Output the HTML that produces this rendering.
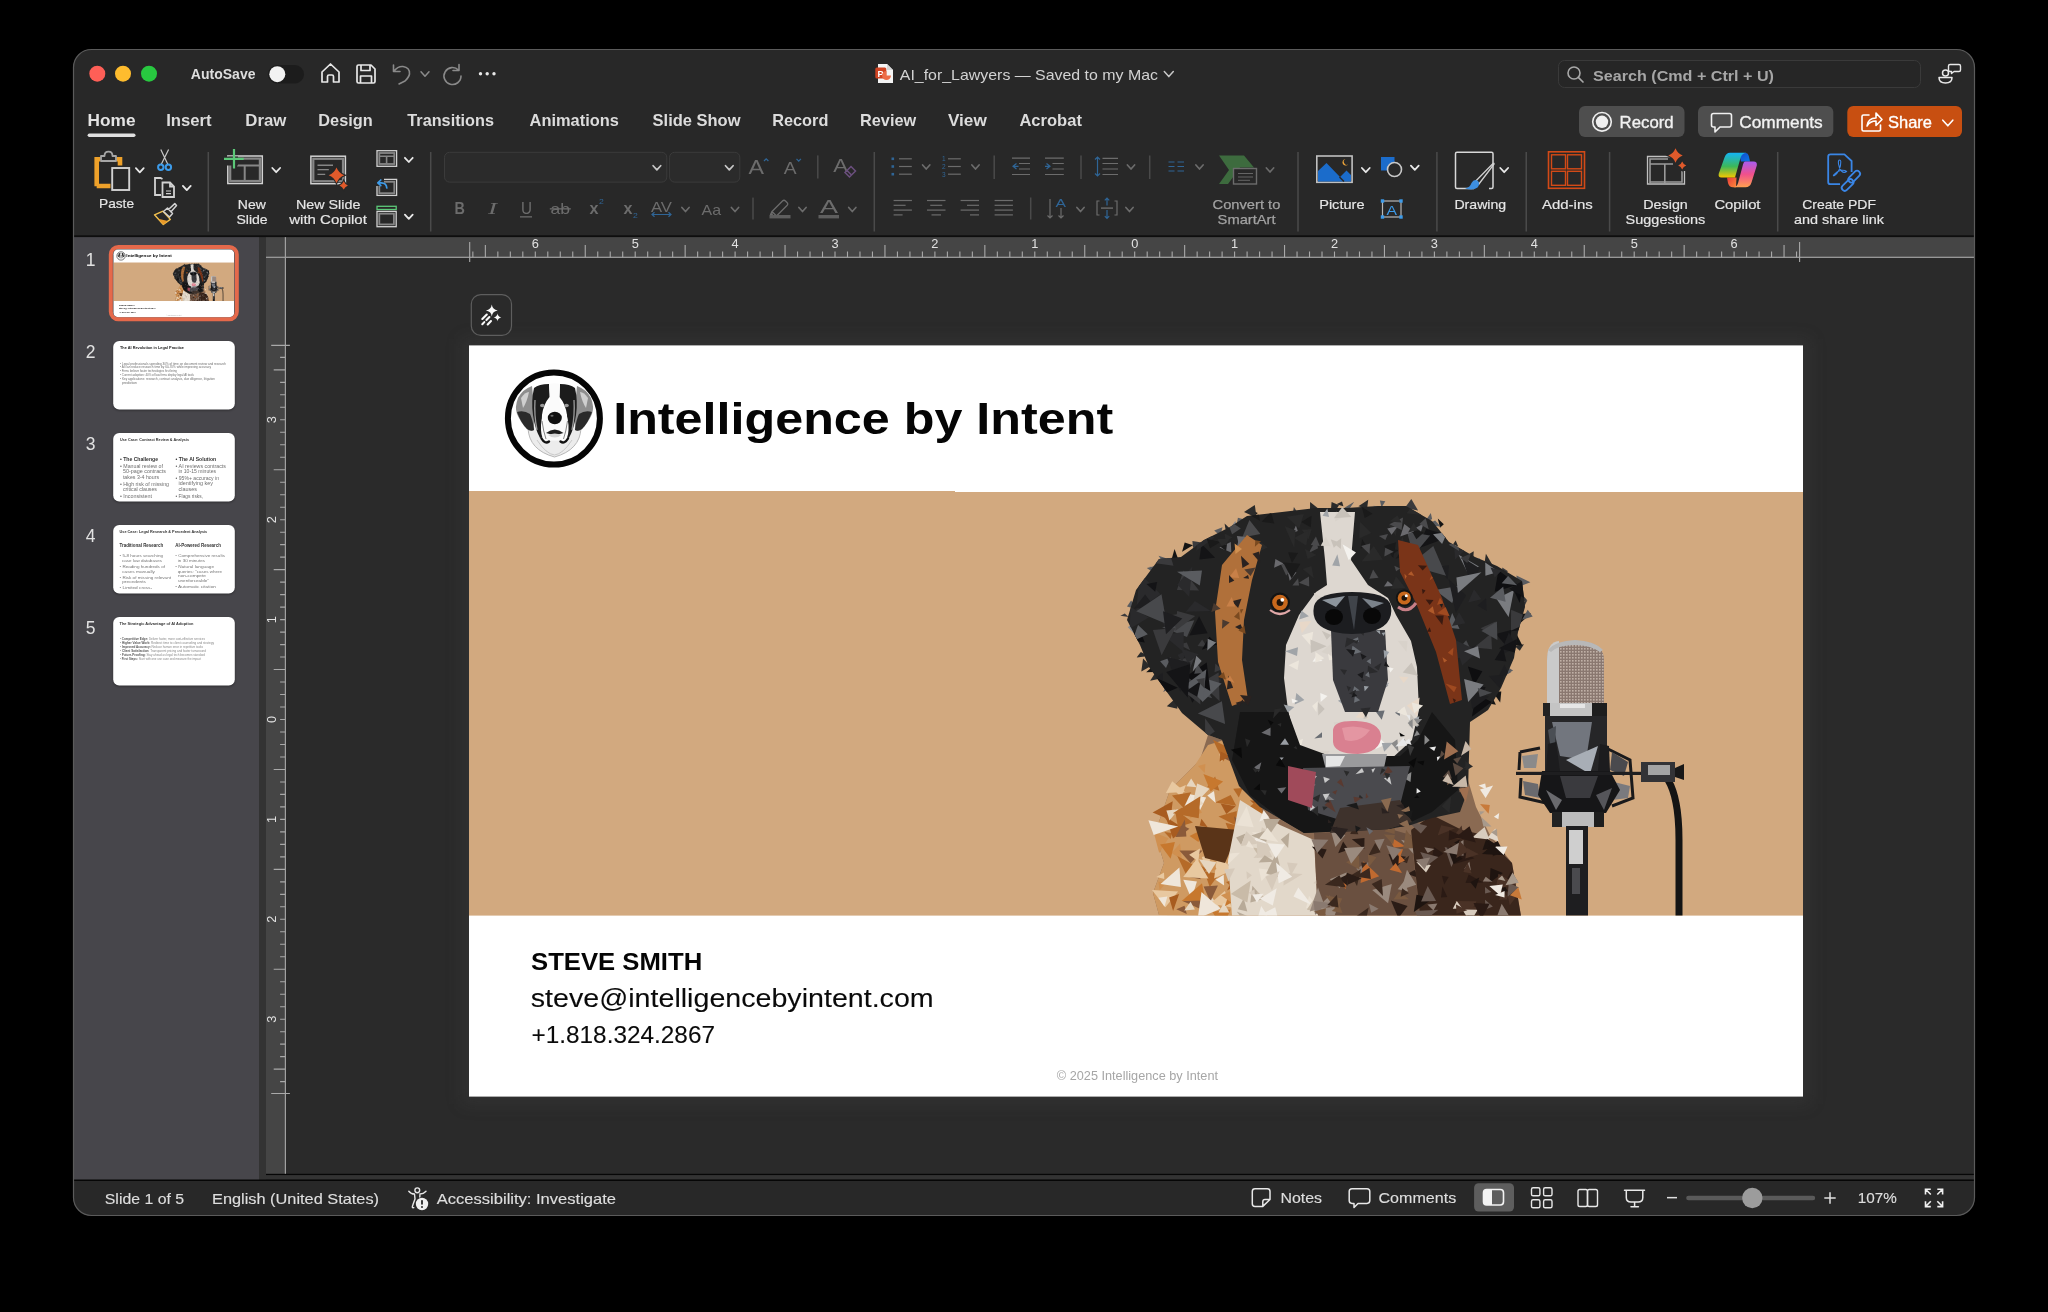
<!DOCTYPE html>
<html><head><meta charset="utf-8">
<style>
*{margin:0;padding:0}
html,body{width:2048px;height:1312px;background:#000;overflow:hidden}
svg{position:absolute;left:0;top:0;font-family:"Liberation Sans",sans-serif;will-change:transform}
text{white-space:pre}
</style></head><body>
<svg width="2048" height="1312" viewBox="0 0 2048 1312">

<defs><clipPath id="winclip"><rect x="73.5" y="49.5" width="1901" height="1166" rx="18"/></clipPath><linearGradient id="edg" x1="0" y1="0" x2="0" y2="1"><stop offset="0" stop-color="#2b2b2b"/><stop offset="1" stop-color="#292929"/></linearGradient><radialGradient id="slideshadow" cx="0.5" cy="0.5" r="0.5"><stop offset="0.85" stop-color="#000" stop-opacity="0.25"/><stop offset="1" stop-color="#000" stop-opacity="0"/></radialGradient><filter id="blur8" x="-10%" y="-10%" width="120%" height="120%"><feGaussianBlur stdDeviation="8"/></filter><filter id="blur3" x="-10%" y="-10%" width="120%" height="120%"><feGaussianBlur stdDeviation="2"/></filter></defs>
<g clip-path="url(#winclip)">
<rect x="73" y="49" width="1902" height="1167" fill="#282828" rx="0" />
<rect x="74" y="237" width="185" height="943" fill="#47464b" rx="0" />
<rect x="259" y="237" width="7" height="943" fill="#333333" rx="0" />
<rect x="266" y="237" width="1708" height="21" fill="#454545" rx="0" />
<rect x="266" y="237" width="19.5" height="937" fill="#454545" rx="0" />
<rect x="286" y="258" width="1689" height="916" fill="#2a2a2a" rx="0" />
<rect x="266" y="256.7" width="1708" height="1.2" fill="#a0a0a0" rx="0" />
<rect x="284.8" y="237" width="1.2" height="937" fill="#a0a0a0" rx="0" />
<rect x="73" y="235.3" width="1902" height="1.8" fill="#0e0e0e" rx="0" />
<rect x="266" y="1173.8" width="1709" height="1.4" fill="#060606" rx="0" />
<rect x="266" y="1175.2" width="1709" height="4.3" fill="#333333" rx="0" />
<rect x="73" y="1179.5" width="1902" height="1.5" fill="#060606" rx="0" />
<rect x="73" y="1181" width="1902" height="40" fill="#282828" rx="0" />
</g>
<rect x="73.5" y="49.5" width="1901" height="1166" rx="18" fill="none" stroke="#5b5b5b" stroke-width="1.2"/>
<circle cx="97.3" cy="73.7" r="8" fill="#fe5f57"/>
<circle cx="123.0" cy="73.7" r="8" fill="#febc2e"/>
<circle cx="149.0" cy="73.7" r="8" fill="#28c840"/>
<text x="190.8" y="79.0" font-size="14" font-weight="bold" fill="#dedede" textLength="64.7" lengthAdjust="spacingAndGlyphs" >AutoSave</text>
<rect x="268" y="65" width="36" height="18.5" fill="#1c1c1c" rx="9.25" />
<circle cx="277.3" cy="74.2" r="8" fill="#f2f2f2"/>
<path d="M322 82 V72 L330.5 64 L339 72 V82 H333.5 V76.5 Q333.5 75 332 75 H329 Q327.5 75 327.5 76.5 V82 Z" fill="none" stroke="#e8e8e8" stroke-width="1.7" stroke-linejoin="round"/>
<path d="M357 66.5 Q357 65 358.5 65 H371 L375 69 V81.5 Q375 83 373.5 83 H358.5 Q357 83 357 81.5 Z M361 65 V70.5 H370 V65 M360.5 83 V76 H371.5 V83" fill="none" stroke="#e8e8e8" stroke-width="1.7" stroke-linejoin="round"/>
<path d="M393.5 65 V71.5 H400 M394 71 Q398 66 403 66.5 Q410 67.5 409.5 74 Q409 77 405 81 L399 84" fill="none" stroke="#8a8a8a" stroke-width="1.6" stroke-linecap="round" stroke-linejoin="round"/>
<path d="M421.0 71.8 L425.0 76.3 L429.0 71.8" fill="none" stroke="#8a8a8a" stroke-width="1.5" stroke-linecap="round" stroke-linejoin="round"/>
<path d="M459 64.5 V70.5 H453 M458.5 70 A8.5 8.5 0 1 0 461 76" fill="none" stroke="#8a8a8a" stroke-width="1.6" stroke-linecap="round" stroke-linejoin="round"/>
<circle cx="480.5" cy="73.8" r="1.7" fill="#e8e8e8"/>
<circle cx="487.2" cy="73.8" r="1.7" fill="#e8e8e8"/>
<circle cx="494" cy="73.8" r="1.7" fill="#e8e8e8"/>
<path d="M878 64 H887 L893 70 V83 H878 Z" fill="#f4f4f4"/><path d="M887 64 V70 H893" fill="#d6d6d6"/><rect x="875.3" y="67.5" width="11" height="11" rx="1.5" fill="#d04423"/><text x="877.6" y="76.5" font-size="9" font-weight="bold" fill="#fff">P</text><path d="M886.5 71 A4.5 4.5 0 1 0 891 75.5 H886.5 Z" fill="#ed6c47"/>
<text x="899.8" y="79.9" font-size="15" font-weight="normal" fill="#d2d2d2" textLength="258.2" lengthAdjust="spacingAndGlyphs" >AI_for_Lawyers — Saved to my Mac</text>
<path d="M1164.3 71.6 L1168.8 76.6 L1173.3 71.6" fill="none" stroke="#c8c8c8" stroke-width="1.5" stroke-linecap="round" stroke-linejoin="round"/>
<rect x="1558.5" y="60.5" width="362" height="27" rx="6" fill="#262626" stroke="#3a3a3a" stroke-width="1"/>
<circle cx="1574" cy="73" r="6" fill="none" stroke="#a8a8a8" stroke-width="1.6"/><path d="M1578.3 77.3 L1583 82" stroke="#a8a8a8" stroke-width="1.7" stroke-linecap="round"/>
<text x="1593.0" y="80.6" font-size="15.5" font-weight="bold" fill="#a6a6a6" textLength="181.0" lengthAdjust="spacingAndGlyphs" >Search (Cmd + Ctrl + U)</text>
<circle cx="1945.5" cy="73" r="3" fill="none" stroke="#e8e8e8" stroke-width="1.5"/><path d="M1939 77.5 H1952 Q1952 83 1945.5 83 Q1939 83 1939 77.5 Z" fill="none" stroke="#e8e8e8" stroke-width="1.5" stroke-linejoin="round"/><path d="M1950 64.5 H1959 Q1960.5 64.5 1960.5 66 V70 Q1960.5 71.5 1959 71.5 H1954 L1951.5 73.5 V71.5 H1950 Q1948.5 71.5 1948.5 70 V66 Q1948.5 64.5 1950 64.5 Z" fill="none" stroke="#e8e8e8" stroke-width="1.4" stroke-linejoin="round"/>
<text x="87.6" y="125.9" font-size="17" font-weight="bold" fill="#e4e4e4" textLength="47.9" lengthAdjust="spacingAndGlyphs" >Home</text>
<text x="166.2" y="125.9" font-size="17" font-weight="bold" fill="#dcdcdc" textLength="45.5" lengthAdjust="spacingAndGlyphs" >Insert</text>
<text x="245.3" y="125.9" font-size="17" font-weight="bold" fill="#dcdcdc" textLength="41.1" lengthAdjust="spacingAndGlyphs" >Draw</text>
<text x="318.3" y="125.9" font-size="17" font-weight="bold" fill="#dcdcdc" textLength="54.5" lengthAdjust="spacingAndGlyphs" >Design</text>
<text x="407.3" y="125.9" font-size="17" font-weight="bold" fill="#dcdcdc" textLength="86.7" lengthAdjust="spacingAndGlyphs" >Transitions</text>
<text x="529.6" y="125.9" font-size="17" font-weight="bold" fill="#dcdcdc" textLength="89.3" lengthAdjust="spacingAndGlyphs" >Animations</text>
<text x="652.6" y="125.9" font-size="17" font-weight="bold" fill="#dcdcdc" textLength="87.9" lengthAdjust="spacingAndGlyphs" >Slide Show</text>
<text x="772.2" y="125.9" font-size="17" font-weight="bold" fill="#dcdcdc" textLength="56.2" lengthAdjust="spacingAndGlyphs" >Record</text>
<text x="860.0" y="125.9" font-size="17" font-weight="bold" fill="#dcdcdc" textLength="56.2" lengthAdjust="spacingAndGlyphs" >Review</text>
<text x="947.9" y="125.9" font-size="17" font-weight="bold" fill="#dcdcdc" textLength="38.9" lengthAdjust="spacingAndGlyphs" >View</text>
<text x="1019.4" y="125.9" font-size="17" font-weight="bold" fill="#dcdcdc" textLength="62.5" lengthAdjust="spacingAndGlyphs" >Acrobat</text>
<rect x="87.6" y="133.4" width="47.9" height="3.5" fill="#e0e0e0" rx="1.75" />
<rect x="1579" y="106" width="105.5" height="31" fill="#4e4e4e" rx="6" />
<circle cx="1602" cy="121.8" r="9.3" fill="none" stroke="#f0f0f0" stroke-width="1.6"/><circle cx="1602" cy="121.8" r="6.2" fill="#f0f0f0"/>
<text x="1619.6" y="128.0" font-size="17" font-weight="normal" fill="#f2f2f2" stroke="#f2f2f2" stroke-width="0.35" textLength="54.1" lengthAdjust="spacingAndGlyphs" >Record</text>
<rect x="1698" y="106" width="135.3" height="31" fill="#4e4e4e" rx="6" />
<path d="M1713.5 113.5 H1729.5 Q1731.5 113.5 1731.5 115.5 V125 Q1731.5 127 1729.5 127 H1720 L1715 132 V127 H1713.5 Q1711.5 127 1711.5 125 V115.5 Q1711.5 113.5 1713.5 113.5 Z" fill="none" stroke="#f0f0f0" stroke-width="1.6" stroke-linejoin="round"/>
<text x="1739.2" y="128.0" font-size="17" font-weight="normal" fill="#f2f2f2" stroke="#f2f2f2" stroke-width="0.35" textLength="83.5" lengthAdjust="spacingAndGlyphs" >Comments</text>
<rect x="1847.3" y="106" width="114.7" height="31" fill="#c84f11" rx="6" />
<path d="M1869 115 H1863.5 Q1862 115 1862 116.5 V129.5 Q1862 131 1863.5 131 H1879 Q1880.5 131 1880.5 129.5 V125" fill="none" stroke="#fff" stroke-width="1.6" stroke-linecap="round"/><path d="M1867 126 Q1868 118 1876 118 V113 L1882 119.5 L1876 125.5 V121 Q1870 121 1867 126 Z" fill="none" stroke="#fff" stroke-width="1.6" stroke-linejoin="round"/>
<text x="1888.0" y="128.0" font-size="17" font-weight="normal" fill="#ffffff" stroke="#ffffff" stroke-width="0.35" textLength="44.0" lengthAdjust="spacingAndGlyphs" >Share</text>
<path d="M1942.8 120.2 L1947.8 125.8 L1952.8 120.2" fill="none" stroke="#fff" stroke-width="1.6" stroke-linecap="round" stroke-linejoin="round"/>
<path d="M96.7 186.2 V159.2 H100.5 M116.5 159.2 H120 V165.5 M96.7 186 H110.5" fill="none" stroke="#eea12a" stroke-width="4.6" stroke-linejoin="miter"/>
<path d="M101 161 V156 H104.5 Q104.5 151.7 108.5 151.7 Q112.5 151.7 112.5 156 H116 V161 Z" fill="none" stroke="#a6a6a6" stroke-width="1.8" stroke-linejoin="round"/>
<rect x="112.2" y="168" width="17" height="22" fill="none" stroke="#d2d2d2" stroke-width="1.9"/>
<path d="M135.9 168.2 L139.8 172.4 L143.7 168.2" fill="none" stroke="#e8e8e8" stroke-width="1.8" stroke-linecap="round" stroke-linejoin="round"/>
<text x="99.0" y="208.2" font-size="13.5" font-weight="normal" fill="#e6e6e6" stroke="#e6e6e6" stroke-width="0.18" textLength="35.0" lengthAdjust="spacingAndGlyphs" >Paste</text>
<path d="M161.3 164.3 L168.6 149.5 M167.8 164.3 L160.8 149.5" stroke="#c8c8c8" stroke-width="1.2" fill="none"/>
<circle cx="160.8" cy="167.3" r="2.7" fill="none" stroke="#3d9be9" stroke-width="2"/><circle cx="168.4" cy="167.3" r="2.7" fill="none" stroke="#3d9be9" stroke-width="2"/>
<path d="M162.5 179 L160.5 178 H155 V195 H161" fill="none" stroke="#d2d2d2" stroke-width="1.8"/>
<path d="M162.5 182.5 H170 L174 186.5 V197 H162.5 Z M170 182.5 V186.5 H174" fill="none" stroke="#d2d2d2" stroke-width="1.8" stroke-linejoin="miter"/>
<path d="M166 191 H171 M166 193.6 H171" stroke="#d2d2d2" stroke-width="1.1"/>
<path d="M182.9 185.9 L186.8 190.1 L190.7 185.9" fill="none" stroke="#e8e8e8" stroke-width="1.8" stroke-linecap="round" stroke-linejoin="round"/>
<path d="M154.5 214.8 L163.3 224.5 L170.3 219.4 L163 211.2 Z" fill="none" stroke="#f2c14e" stroke-width="1.4" stroke-linejoin="round"/>
<path d="M158 218.8 L163.3 224.5 L168 221 Z" fill="#e99a2a"/>
<path d="M163.5 211.5 L167.5 208 L172.5 213.5 L169.5 217 Z M168.5 209.5 L174.8 203.6 L176.5 205.4 L170.8 212" fill="none" stroke="#d2d2d2" stroke-width="1.5" stroke-linejoin="round"/>
<rect x="207.55" y="152" width="1.5" height="79.5" fill="#4a4a4a"/>
<rect x="227.8" y="156" width="34.5" height="27.5" fill="none" stroke="#d2d2d2" stroke-width="1.5"/>
<rect x="230.2" y="158.6" width="29.7" height="22.4" fill="none" stroke="#868686" stroke-width="2.2"/>
<path d="M237 165.5 H260 M244.7 165.5 V180.5" stroke="#868686" stroke-width="2"/>
<rect x="221" y="156.5" width="17" height="9" fill="#282828"/>
<path d="M234 149 V168.5 M224 158.8 H243.7" stroke="#5cc878" stroke-width="2.2"/>
<path d="M272.3 168.0 L276.2 172.2 L280.1 168.0" fill="none" stroke="#e8e8e8" stroke-width="1.8" stroke-linecap="round" stroke-linejoin="round"/>
<text x="237.8" y="208.5" font-size="13.5" font-weight="normal" fill="#e6e6e6" stroke="#e6e6e6" stroke-width="0.18" textLength="28.0" lengthAdjust="spacingAndGlyphs" >New</text>
<text x="236.4" y="224.0" font-size="13.5" font-weight="normal" fill="#e6e6e6" stroke="#e6e6e6" stroke-width="0.18" textLength="31.3" lengthAdjust="spacingAndGlyphs" >Slide</text>
<rect x="310.9" y="156.2" width="34.5" height="27.5" fill="none" stroke="#d2d2d2" stroke-width="1.5"/>
<rect x="313.3" y="158.8" width="29.7" height="22.4" fill="none" stroke="#868686" stroke-width="2.2"/>
<path d="M317.5 165.3 H333 M317.5 169.6 H328.8 M317.5 174.4 H325.2" stroke="#868686" stroke-width="1.4"/>
<path d="M336.5 167.39999999999998 Q338.684 173.016 344.3 175.2 Q338.684 177.384 336.5 183.0 Q334.316 177.384 328.7 175.2 Q334.316 173.016 336.5 167.39999999999998 Z" fill="#e05a2b" stroke="#282828" stroke-width="2" paint-order="stroke"/>
<path d="M343.7 181.20000000000002 Q344.876 184.22400000000002 347.9 185.4 Q344.876 186.576 343.7 189.6 Q342.524 186.576 339.5 185.4 Q342.524 184.22400000000002 343.7 181.20000000000002 Z" fill="#e05a2b" stroke="#282828" stroke-width="2" paint-order="stroke"/>
<text x="295.9" y="208.5" font-size="13.5" font-weight="normal" fill="#e6e6e6" stroke="#e6e6e6" stroke-width="0.18" textLength="64.5" lengthAdjust="spacingAndGlyphs" >New Slide</text>
<text x="289.2" y="224.0" font-size="13.5" font-weight="normal" fill="#e6e6e6" stroke="#e6e6e6" stroke-width="0.18" textLength="77.7" lengthAdjust="spacingAndGlyphs" >with Copilot</text>
<rect x="377" y="150.7" width="19.6" height="15.6" fill="none" stroke="#d2d2d2" stroke-width="1.3"/>
<rect x="379.3" y="153" width="15" height="11" fill="none" stroke="#868686" stroke-width="1.8"/><path d="M380 156.2 H394 M386.6 156.2 V163.5" stroke="#868686" stroke-width="1.6"/>
<path d="M404.9 157.8 L408.8 162.0 L412.7 157.8" fill="none" stroke="#e8e8e8" stroke-width="1.8" stroke-linecap="round" stroke-linejoin="round"/>
<rect x="377" y="179.4" width="19.6" height="16" fill="none" stroke="#d2d2d2" stroke-width="1.3"/>
<rect x="379.3" y="181.8" width="15" height="11.4" fill="none" stroke="#868686" stroke-width="1.8"/>
<rect x="375" y="177" width="9" height="9" fill="#282828"/>
<path d="M386.8 188 Q386.5 182.7 381 182.8 H378.2 M380.8 180 L377.8 182.8 L380.8 185.6" fill="none" stroke="#3d9be9" stroke-width="1.7" stroke-linecap="round" stroke-linejoin="round"/>
<rect x="377" y="206.3" width="19.2" height="3.2" fill="none" stroke="#5cc878" stroke-width="1.3"/>
<rect x="377" y="211.4" width="19.2" height="15.3" fill="none" stroke="#d2d2d2" stroke-width="1.3"/><rect x="379.3" y="213.7" width="14.6" height="10.7" fill="none" stroke="#868686" stroke-width="1.8"/>
<path d="M404.9 214.7 L408.8 218.9 L412.7 214.7" fill="none" stroke="#e8e8e8" stroke-width="1.8" stroke-linecap="round" stroke-linejoin="round"/>
<rect x="429.95" y="152" width="1.5" height="79.5" fill="#4a4a4a"/>
<rect x="444.5" y="152.3" width="222.3" height="29.8" rx="5" fill="#2b2b2b" stroke="#3b3b3b" stroke-width="1"/>
<path d="M653.1 165.7 L656.9 169.9 L660.7 165.7" fill="none" stroke="#c8c8c8" stroke-width="1.7" stroke-linecap="round" stroke-linejoin="round"/>
<rect x="669.6" y="152.3" width="70.2" height="29.8" rx="5" fill="#2b2b2b" stroke="#3b3b3b" stroke-width="1"/>
<path d="M725.5 165.7 L729.3 169.9 L733.1 165.7" fill="none" stroke="#c8c8c8" stroke-width="1.7" stroke-linecap="round" stroke-linejoin="round"/>
<text x="748.5" y="173.5" font-size="20" font-weight="normal" fill="#6c6c6c" textLength="15.5" lengthAdjust="spacingAndGlyphs" >A</text>
<path d="M764 161 L766.2 158.8 L768.4 161" fill="none" stroke="#2f6596" stroke-width="1.3"/>
<text x="783.7" y="173.5" font-size="16" font-weight="normal" fill="#6c6c6c" textLength="12.8" lengthAdjust="spacingAndGlyphs" >A</text>
<path d="M796.5 158.9 L798.7 161.1 L800.9 158.9" fill="none" stroke="#2f6596" stroke-width="1.3"/>
<rect x="817.05" y="155.4" width="1.5" height="23.099999999999994" fill="#4a4a4a"/>
<text x="833.2" y="172.0" font-size="19" font-weight="normal" fill="#6c6c6c" textLength="14.8" lengthAdjust="spacingAndGlyphs" >A</text>
<path d="M845 172.5 L851 166.5 L855.5 171 L849.5 177 Z M847 170.5 L851.5 175" fill="none" stroke="#6b4f7e" stroke-width="1.5"/>
<rect x="873.55" y="152" width="1.5" height="79.5" fill="#4a4a4a"/>
<text x="454.6" y="213.6" font-size="16.5" font-weight="bold" fill="#6c6c6c" textLength="10.4" lengthAdjust="spacingAndGlyphs" >B</text>
<text x="488.0" y="213.6" font-size="17" font-weight="normal" fill="#6c6c6c" textLength="9.0" lengthAdjust="spacingAndGlyphs" font-style="italic" font-family="Liberation Serif">I</text>
<text x="521.0" y="213.6" font-size="16" font-weight="normal" fill="#6c6c6c" textLength="11.0" lengthAdjust="spacingAndGlyphs" >U</text>
<rect x="520" y="216.2" width="12" height="1.3" fill="#6c6c6c"/>
<text x="550.5" y="213.6" font-size="15" font-weight="normal" fill="#6c6c6c" textLength="19.5" lengthAdjust="spacingAndGlyphs" >ab</text>
<rect x="549.8" y="208.2" width="21" height="1.3" fill="#6c6c6c"/>
<text x="589.5" y="213.6" font-size="16.5" font-weight="bold" fill="#6c6c6c" textLength="9.0" lengthAdjust="spacingAndGlyphs" >x</text>
<text x="599.0" y="203.5" font-size="8" font-weight="normal" fill="#2f6596" textLength="4.8" lengthAdjust="spacingAndGlyphs" >2</text>
<text x="623.5" y="213.6" font-size="16.5" font-weight="bold" fill="#6c6c6c" textLength="9.0" lengthAdjust="spacingAndGlyphs" >x</text>
<text x="633.0" y="217.5" font-size="8" font-weight="normal" fill="#2f6596" textLength="4.8" lengthAdjust="spacingAndGlyphs" >2</text>
<text x="651.0" y="212.0" font-size="14.5" font-weight="normal" fill="#6c6c6c" textLength="21.0" lengthAdjust="spacingAndGlyphs" >AV</text>
<path d="M652 214.5 H671 M654.5 212.3 L652 214.5 L654.5 216.8 M668.5 212.3 L671 214.5 L668.5 216.8" fill="none" stroke="#2f6596" stroke-width="1.2"/>
<path d="M681.9 207.5 L685.5 211.5 L689.1 207.5" fill="none" stroke="#6c6c6c" stroke-width="1.7" stroke-linecap="round" stroke-linejoin="round"/>
<text x="701.5" y="214.5" font-size="15" font-weight="normal" fill="#6c6c6c" textLength="19.5" lengthAdjust="spacingAndGlyphs" >Aa</text>
<path d="M731.4 207.5 L735.0 211.5 L738.6 207.5" fill="none" stroke="#6c6c6c" stroke-width="1.7" stroke-linecap="round" stroke-linejoin="round"/>
<rect x="752.25" y="197.6" width="1.5" height="21.900000000000006" fill="#4a4a4a"/>
<path d="M772 211.5 L782.5 201 Q784 199.5 785.5 201 L787 202.5 Q788.5 204 787 205.5 L776.5 216 Z M772 211.5 L770.5 214.5 L773 214" fill="none" stroke="#6c6c6c" stroke-width="1.3" stroke-linejoin="round"/>
<rect x="769.5" y="215" width="21" height="3.4" fill="#5e5e5e" rx="0" />
<path d="M798.9 207.5 L802.5 211.5 L806.1 207.5" fill="none" stroke="#6c6c6c" stroke-width="1.7" stroke-linecap="round" stroke-linejoin="round"/>
<text x="820.0" y="212.5" font-size="17.5" font-weight="normal" fill="#6c6c6c" textLength="18.0" lengthAdjust="spacingAndGlyphs" >A</text>
<rect x="818.5" y="215" width="20.5" height="3.4" fill="#5e5e5e" rx="0" />
<path d="M848.7 207.5 L852.3 211.5 L855.9 207.5" fill="none" stroke="#6c6c6c" stroke-width="1.7" stroke-linecap="round" stroke-linejoin="round"/>
<rect x="891.5" y="157.5" width="2.6" height="2.6" fill="#2f6596"/>
<rect x="899" y="158.20000000000002" width="12.8" height="1.2" fill="#6c6c6c"/>
<rect x="891.5" y="165.2" width="2.6" height="2.6" fill="#2f6596"/>
<rect x="899" y="165.9" width="12.8" height="1.2" fill="#6c6c6c"/>
<rect x="891.5" y="172.89999999999998" width="2.6" height="2.6" fill="#2f6596"/>
<rect x="899" y="173.6" width="12.8" height="1.2" fill="#6c6c6c"/>
<path d="M922.6 165.0 L926.2 169.0 L929.8 165.0" fill="none" stroke="#6c6c6c" stroke-width="1.7" stroke-linecap="round" stroke-linejoin="round"/>
<text x="942" y="161.4" font-size="6.5" fill="#2f6596">1</text>
<rect x="948" y="158.20000000000002" width="12.8" height="1.2" fill="#6c6c6c"/>
<text x="942" y="169.1" font-size="6.5" fill="#2f6596">2</text>
<rect x="948" y="165.9" width="12.8" height="1.2" fill="#6c6c6c"/>
<text x="942" y="176.79999999999998" font-size="6.5" fill="#2f6596">3</text>
<rect x="948" y="173.6" width="12.8" height="1.2" fill="#6c6c6c"/>
<path d="M971.9 165.0 L975.5 169.0 L979.1 165.0" fill="none" stroke="#6c6c6c" stroke-width="1.7" stroke-linecap="round" stroke-linejoin="round"/>
<rect x="993.45" y="155.5" width="1.5" height="23.5" fill="#4a4a4a"/>
<path d="M1012 158.2 H1030 M1019 163.5 H1030 M1019 169 H1030 M1012 174.5 H1030" stroke="#6c6c6c" stroke-width="1.2"/>
<path d="M1016.5 163.5 L1013 166.3 L1016.5 169 M1013 166.3 H1018.5" fill="none" stroke="#2f6596" stroke-width="1.2"/>
<path d="M1045 158.2 H1063.8 M1052.5 163.5 H1063.8 M1052.5 169 H1063.8 M1045 174.5 H1063.8" stroke="#6c6c6c" stroke-width="1.2"/>
<path d="M1046.5 163.5 L1050 166.3 L1046.5 169 M1045 166.3 H1050" fill="none" stroke="#2f6596" stroke-width="1.2"/>
<rect x="1080.25" y="155.5" width="1.5" height="23.5" fill="#4a4a4a"/>
<path d="M1102.5 158.4 H1118 M1102.5 163.5 H1118 M1102.5 169 H1118 M1102.5 174.5 H1118" stroke="#6c6c6c" stroke-width="1.2"/>
<path d="M1097.5 157 V176 M1095 159.5 L1097.5 157 L1100 159.5 M1095 173.5 L1097.5 176 L1100 173.5" fill="none" stroke="#2f6596" stroke-width="1.2"/>
<path d="M1127.4 165.0 L1131.0 169.0 L1134.6 165.0" fill="none" stroke="#6c6c6c" stroke-width="1.7" stroke-linecap="round" stroke-linejoin="round"/>
<rect x="1148.95" y="155.5" width="1.5" height="23.5" fill="#4a4a4a"/>
<path d="M1168.5 162 H1174.5 M1168.5 166.5 H1174.5 M1168.5 171 H1174.5 M1177.5 162 H1184 M1177.5 166.5 H1184 M1177.5 171 H1184" stroke="#2f6596" stroke-width="1.1"/>
<path d="M1195.9 165.0 L1199.5 169.0 L1203.1 165.0" fill="none" stroke="#6c6c6c" stroke-width="1.7" stroke-linecap="round" stroke-linejoin="round"/>
<path d="M1219 155.5 H1244 L1254 167.5 H1240 L1228 184 H1219 L1229 170 Z" fill="#3d6b3e"/>
<rect x="1233.5" y="168.5" width="23" height="15.5" fill="#282828" stroke="#6c6c6c" stroke-width="1.4"/>
<path d="M1238 173.5 H1253 M1238 177 H1253 M1238 180.3 H1250" stroke="#6c6c6c" stroke-width="0.9"/>
<path d="M1266.4 168.0 L1270.0 172.0 L1273.6 168.0" fill="none" stroke="#6c6c6c" stroke-width="1.7" stroke-linecap="round" stroke-linejoin="round"/>
<text x="1212.6" y="208.7" font-size="13.5" font-weight="normal" fill="#a2a2a2" stroke="#a2a2a2" stroke-width="0.25" textLength="67.7" lengthAdjust="spacingAndGlyphs" >Convert to</text>
<text x="1217.6" y="223.8" font-size="13.5" font-weight="normal" fill="#a2a2a2" stroke="#a2a2a2" stroke-width="0.25" textLength="58.0" lengthAdjust="spacingAndGlyphs" >SmartArt</text>
<rect x="893.6" y="199.9" width="18.3" height="1.2" fill="#6c6c6c"/>
<rect x="893.6" y="204.70000000000002" width="12" height="1.2" fill="#6c6c6c"/>
<rect x="893.6" y="209.5" width="18.3" height="1.2" fill="#6c6c6c"/>
<rect x="893.6" y="214.3" width="9" height="1.2" fill="#6c6c6c"/>
<rect x="927" y="199.9" width="18.5" height="1.2" fill="#6c6c6c"/>
<rect x="930.25" y="204.70000000000002" width="12" height="1.2" fill="#6c6c6c"/>
<rect x="927" y="209.5" width="18.5" height="1.2" fill="#6c6c6c"/>
<rect x="931.5" y="214.3" width="9.5" height="1.2" fill="#6c6c6c"/>
<rect x="960.6" y="199.9" width="18.4" height="1.2" fill="#6c6c6c"/>
<rect x="967.0" y="204.70000000000002" width="12" height="1.2" fill="#6c6c6c"/>
<rect x="960.6" y="209.5" width="18.4" height="1.2" fill="#6c6c6c"/>
<rect x="970.0" y="214.3" width="9" height="1.2" fill="#6c6c6c"/>
<rect x="994.6" y="199.9" width="18.3" height="1.2" fill="#6c6c6c"/>
<rect x="994.6" y="204.70000000000002" width="18.3" height="1.2" fill="#6c6c6c"/>
<rect x="994.6" y="209.5" width="18.3" height="1.2" fill="#6c6c6c"/>
<rect x="994.6" y="214.3" width="18.3" height="1.2" fill="#6c6c6c"/>
<rect x="1029.95" y="197.5" width="1.5" height="22.0" fill="#4a4a4a"/>
<path d="M1050 199 V218 M1047.5 215.5 L1050 218 L1052.5 215.5 M1061 208 V218 M1058.5 215.5 L1061 218 L1063.5 215.5" fill="none" stroke="#6c6c6c" stroke-width="1.2"/>
<text x="1055.5" y="207.0" font-size="11.5" font-weight="normal" fill="#2f6596" textLength="10.5" lengthAdjust="spacingAndGlyphs" >A</text>
<path d="M1076.9 207.5 L1080.5 211.5 L1084.1 207.5" fill="none" stroke="#6c6c6c" stroke-width="1.7" stroke-linecap="round" stroke-linejoin="round"/>
<path d="M1099.5 201 H1097 V215 H1099.5 M1114.5 201 H1117 V215 H1114.5" fill="none" stroke="#6c6c6c" stroke-width="1.2"/>
<rect x="1101" y="207.4" width="12" height="1.4" fill="#6c6c6c" rx="0" />
<path d="M1107 198 V205.5 M1104.8 200.3 L1107 198 L1109.2 200.3 M1107 210 V218.5 M1104.8 216.2 L1107 218.5 L1109.2 216.2" fill="none" stroke="#2f6596" stroke-width="1.2"/>
<path d="M1125.9 207.5 L1129.5 211.5 L1133.1 207.5" fill="none" stroke="#6c6c6c" stroke-width="1.7" stroke-linecap="round" stroke-linejoin="round"/>
<rect x="1297.25" y="152" width="1.5" height="79.5" fill="#4a4a4a"/>
<rect x="1316.8" y="156" width="35.3" height="26.3" fill="none" stroke="#c0c0c0" stroke-width="1.6"/>
<path d="M1318 181.5 V171 L1326.5 163 L1340 177 L1346.5 170.5 L1351 175 V181.5 Z" fill="#1b6ccb"/>
<path d="M1339.5 177 L1344 181.5" stroke="#282828" stroke-width="1.5"/>
<path d="M1345.5 159 A3.3 3.3 0 1 0 1348.2 164.5 A2.7 2.7 0 0 1 1345.5 159 Z" fill="#f0a63a"/>
<path d="M1361.9 168.0 L1365.8 172.2 L1369.7 168.0" fill="none" stroke="#e8e8e8" stroke-width="1.8" stroke-linecap="round" stroke-linejoin="round"/>
<text x="1319.2" y="208.8" font-size="13.5" font-weight="normal" fill="#e6e6e6" stroke="#e6e6e6" stroke-width="0.18" textLength="45.3" lengthAdjust="spacingAndGlyphs" >Picture</text>
<rect x="1381" y="157" width="13.5" height="13.5" fill="#1b6ccb"/>
<circle cx="1394.5" cy="169.5" r="7" fill="#282828" stroke="#c8c8c8" stroke-width="1.6"/>
<path d="M1410.9 165.7 L1414.8 169.9 L1418.7 165.7" fill="none" stroke="#e8e8e8" stroke-width="1.8" stroke-linecap="round" stroke-linejoin="round"/>
<rect x="1382.5" y="201" width="18.5" height="16" fill="none" stroke="#b8b8b8" stroke-width="1.2"/>
<rect x="1380.8" y="199.3" width="3.4" height="3.4" fill="#3d9be9"/>
<rect x="1399.3" y="199.3" width="3.4" height="3.4" fill="#3d9be9"/>
<rect x="1380.8" y="215.3" width="3.4" height="3.4" fill="#3d9be9"/>
<rect x="1399.3" y="215.3" width="3.4" height="3.4" fill="#3d9be9"/>
<text x="1386.5" y="214.5" font-size="13" font-weight="normal" fill="#3d9be9" textLength="10.5" lengthAdjust="spacingAndGlyphs" >A</text>
<rect x="1436.15" y="152" width="1.5" height="79.5" fill="#4a4a4a"/>
<path d="M1474 188.5 H1457 Q1455.5 188.5 1455.5 187 V153.8 Q1455.5 152.3 1457 152.3 H1491.5 Q1493 152.3 1493 153.8 V187 Q1493 188.5 1491.5 188.5 H1489" fill="none" stroke="#d8d8d8" stroke-width="1.5"/>
<path d="M1475.3 181.5 L1493 163.6 Q1494.3 162.6 1494 164.2 L1478.5 184.5" fill="none" stroke="#d0d0d0" stroke-width="1.3"/>
<path d="M1465 188.5 Q1470 187.5 1471.5 183 Q1474 178.5 1478 181 Q1480.5 184 1477.5 187.5 Q1473 191 1465 188.5 Z" fill="#3d8fe0"/>
<path d="M1500.3 168.0 L1504.2 172.2 L1508.1 168.0" fill="none" stroke="#e8e8e8" stroke-width="1.8" stroke-linecap="round" stroke-linejoin="round"/>
<text x="1454.4" y="208.8" font-size="13.5" font-weight="normal" fill="#e6e6e6" stroke="#e6e6e6" stroke-width="0.18" textLength="51.8" lengthAdjust="spacingAndGlyphs" >Drawing</text>
<rect x="1525.5" y="152" width="1.5" height="79.5" fill="#4a4a4a"/>
<rect x="1548.5" y="151.8" width="36" height="36.5" fill="none" stroke="#d34a17" stroke-width="1.6"/>
<rect x="1551.5" y="154.8" width="14" height="14" fill="none" stroke="#d34a17" stroke-width="1.4"/>
<rect x="1567.5" y="154.8" width="14" height="14" fill="none" stroke="#d34a17" stroke-width="1.4"/>
<rect x="1551.5" y="171.3" width="14" height="14" fill="none" stroke="#d34a17" stroke-width="1.4"/>
<rect x="1567.5" y="171.3" width="14" height="14" fill="none" stroke="#d34a17" stroke-width="1.4"/>
<text x="1542.0" y="208.8" font-size="13.5" font-weight="normal" fill="#e6e6e6" stroke="#e6e6e6" stroke-width="0.18" textLength="50.7" lengthAdjust="spacingAndGlyphs" >Add-ins</text>
<rect x="1608.85" y="152" width="1.5" height="79.5" fill="#4a4a4a"/>
<path d="M1670.5 156.5 H1647.5 V184 H1684.5 V171" fill="none" stroke="#c0c0c0" stroke-width="1.3"/>
<path d="M1650 183 V159 H1668 M1650 164 H1673 M1664.8 164 V183 M1650 182 H1682 V171" fill="none" stroke="#9a9a9a" stroke-width="1.6"/>
<path d="M1675.5 148.3 Q1677.516 153.484 1682.7 155.5 Q1677.516 157.516 1675.5 162.7 Q1673.484 157.516 1668.3 155.5 Q1673.484 153.484 1675.5 148.3 Z" fill="#e05a2b" stroke="#282828" stroke-width="2" paint-order="stroke"/>
<path d="M1682.2 161.5 Q1683.32 164.38 1686.2 165.5 Q1683.32 166.62 1682.2 169.5 Q1681.0800000000002 166.62 1678.2 165.5 Q1681.0800000000002 164.38 1682.2 161.5 Z" fill="#e05a2b" stroke="#282828" stroke-width="2" paint-order="stroke"/>
<text x="1643.3" y="208.8" font-size="13.5" font-weight="normal" fill="#e6e6e6" stroke="#e6e6e6" stroke-width="0.18" textLength="44.5" lengthAdjust="spacingAndGlyphs" >Design</text>
<text x="1625.6" y="223.6" font-size="13.5" font-weight="normal" fill="#e6e6e6" stroke="#e6e6e6" stroke-width="0.18" textLength="79.7" lengthAdjust="spacingAndGlyphs" >Suggestions</text>
<defs><linearGradient id="cpA" x1="0" y1="0" x2="0" y2="1"><stop offset="0" stop-color="#14b4f5"/><stop offset="0.55" stop-color="#3cb85a"/><stop offset="1" stop-color="#f5c800"/></linearGradient><linearGradient id="cpB" x1="0" y1="0" x2="0" y2="1"><stop offset="0" stop-color="#a85cf0"/><stop offset="0.5" stop-color="#f0508c"/><stop offset="1" stop-color="#ffa050"/></linearGradient><linearGradient id="cpC" x1="0" y1="0" x2="1" y2="1"><stop offset="0" stop-color="#1448c8"/><stop offset="1" stop-color="#0a78e6"/></linearGradient><linearGradient id="cpD" x1="0" y1="0" x2="1" y2="1"><stop offset="0" stop-color="#e83a3a"/><stop offset="1" stop-color="#ff8a3a"/></linearGradient></defs>
<path d="M1739 153 H1746 Q1748 153 1748.8 156 L1750 161.5 H1741 Z" fill="url(#cpC)"/>
<path d="M1727 177.5 H1736.5 L1736 187.2 H1733 Q1729 187.2 1728 183 Z" fill="url(#cpD)"/>
<path d="M1730 152.8 H1746.5 Q1742 153 1740.5 158 L1735 177.5 H1721.5 Q1717.8 177.5 1718.8 173.5 L1724.5 157.5 Q1726 152.8 1730 152.8 Z" fill="url(#cpA)"/>
<path d="M1745 161.4 H1753.5 Q1757.5 161.4 1756.8 165.5 L1751.5 182.5 Q1750 187.2 1745.5 187.2 H1733.5 Q1737 187 1738.2 182.5 L1743 164.5 Q1743.8 161.4 1745 161.4 Z" fill="url(#cpB)"/>
<text x="1714.4" y="208.8" font-size="13.5" font-weight="normal" fill="#e6e6e6" stroke="#e6e6e6" stroke-width="0.18" textLength="46.1" lengthAdjust="spacingAndGlyphs" >Copilot</text>
<rect x="1776.95" y="152" width="1.5" height="79.5" fill="#4a4a4a"/>
<path d="M1840 184.2 H1830.5 Q1828.2 184.2 1828.2 181.9 V156.7 Q1828.2 154.4 1830.5 154.4 H1844.4 L1851.6 161 V172" fill="none" stroke="#3a86e6" stroke-width="1.8" stroke-linejoin="round"/>
<path d="M1839.7 160 Q1838 160 1838.5 164 Q1839 168 1841.5 171 Q1844 173.5 1846.5 171.5 Q1845 170 1841.5 170.3 Q1837 171 1834 174.5 Q1832.5 176.5 1834.5 175.5 Q1837 174 1839 170 Q1841 165.5 1840.8 161.5 Q1840.6 160 1839.7 160 Z" fill="none" stroke="#3a86e6" stroke-width="1.1"/>
<rect x="-7" y="-3" width="14" height="6" rx="3" fill="none" stroke="#3a86e6" stroke-width="1.8" transform="translate(1854.2 176.6) rotate(-45)"/>
<rect x="-7" y="-3" width="14" height="6" rx="3" fill="none" stroke="#3a86e6" stroke-width="1.8" transform="translate(1847.6 185) rotate(-45)"/>
<text x="1802.2" y="208.8" font-size="13.5" font-weight="normal" fill="#e6e6e6" stroke="#e6e6e6" stroke-width="0.18" textLength="73.8" lengthAdjust="spacingAndGlyphs" >Create PDF</text>
<text x="1794.0" y="223.6" font-size="13.5" font-weight="normal" fill="#e6e6e6" stroke="#e6e6e6" stroke-width="0.18" textLength="89.9" lengthAdjust="spacingAndGlyphs" >and share link</text>
<text x="104.8" y="1203.6" font-size="15" font-weight="normal" fill="#dedede" stroke="#dedede" stroke-width="0.15" textLength="79.3" lengthAdjust="spacingAndGlyphs" >Slide 1 of 5</text>
<text x="212.0" y="1203.6" font-size="15" font-weight="normal" fill="#dedede" stroke="#dedede" stroke-width="0.15" textLength="167.0" lengthAdjust="spacingAndGlyphs" >English (United States)</text>
<circle cx="417.3" cy="1190.3" r="2.4" fill="none" stroke="#e6e6e6" stroke-width="1.4"/><path d="M408.8 1191.2 Q411 1194 414.5 1194 L415 1199 Q413.5 1203 412.5 1206 Q411.8 1208.2 413.8 1207.6" fill="none" stroke="#e6e6e6" stroke-width="1.4" stroke-linecap="round" stroke-linejoin="round"/><path d="M426 1191.2 Q423.5 1194 420 1194 L419.8 1197" fill="none" stroke="#e6e6e6" stroke-width="1.4" stroke-linecap="round"/><circle cx="422" cy="1204" r="6.2" fill="#f0f0f0"/><rect x="421.1" y="1200" width="1.8" height="4.8" rx="0.8" fill="#282828"/><circle cx="422" cy="1207" r="1" fill="#282828"/>
<text x="436.8" y="1203.6" font-size="15" font-weight="normal" fill="#dedede" stroke="#dedede" stroke-width="0.15" textLength="179.2" lengthAdjust="spacingAndGlyphs" >Accessibility: Investigate</text>
<path d="M1270 1199.5 V1191.5 Q1270 1188.8 1267.3 1188.8 H1255 Q1252.3 1188.8 1252.3 1191.5 V1203.7 Q1252.3 1206.4 1255 1206.4 H1262.8 Z M1270 1199.5 H1265 Q1262.8 1199.5 1262.8 1201.7 V1206.4" fill="none" stroke="#e8e8e8" stroke-width="1.5" stroke-linejoin="round"/>
<text x="1280.4" y="1203.4" font-size="15" font-weight="normal" fill="#dedede" stroke="#dedede" stroke-width="0.15" textLength="41.6" lengthAdjust="spacingAndGlyphs" >Notes</text>
<path d="M1352 1188.8 H1367 Q1369.8 1188.8 1369.8 1191.6 V1200.6 Q1369.8 1203.4 1367 1203.4 H1358 L1354 1207.5 V1203.4 H1352 Q1349.2 1203.4 1349.2 1200.6 V1191.6 Q1349.2 1188.8 1352 1188.8 Z" fill="none" stroke="#e8e8e8" stroke-width="1.5" stroke-linejoin="round"/>
<text x="1378.5" y="1203.4" font-size="15" font-weight="normal" fill="#dedede" stroke="#dedede" stroke-width="0.15" textLength="77.7" lengthAdjust="spacingAndGlyphs" >Comments</text>
<rect x="1474.1" y="1183.3" width="39.9" height="28.3" fill="#5e5e5e" rx="4.5" />
<rect x="1483.5" y="1189.5" width="20" height="15.5" rx="3.2" fill="none" stroke="#f4f4f4" stroke-width="1.6"/><path d="M1492 1189.5 H1486.7 Q1483.5 1189.5 1483.5 1192.7 V1201.8 Q1483.5 1205 1486.7 1205 H1492 Z" fill="#f4f4f4"/>
<rect x="1531.5" y="1187.8" width="8.4" height="8" rx="1.6" fill="none" stroke="#e8e8e8" stroke-width="1.4"/>
<rect x="1543.6" y="1187.8" width="8.4" height="8" rx="1.6" fill="none" stroke="#e8e8e8" stroke-width="1.4"/>
<rect x="1531.5" y="1199.8" width="8.4" height="8" rx="1.6" fill="none" stroke="#e8e8e8" stroke-width="1.4"/>
<rect x="1543.6" y="1199.8" width="8.4" height="8" rx="1.6" fill="none" stroke="#e8e8e8" stroke-width="1.4"/>
<rect x="1578" y="1189.5" width="9.5" height="17" rx="1.8" fill="none" stroke="#e8e8e8" stroke-width="1.4"/><rect x="1587.5" y="1189.5" width="10" height="17" rx="1.8" fill="none" stroke="#e8e8e8" stroke-width="1.4"/>
<path d="M1624.5 1190.2 H1644.5 M1626.3 1190.6 V1197.5 Q1626.3 1202 1631 1202 H1638.2 Q1642.8 1202 1642.8 1197.5 V1190.6 M1634.6 1202 V1206.6 M1631 1206.8 H1638.4" fill="none" stroke="#e8e8e8" stroke-width="1.5" stroke-linecap="round"/>
<rect x="1667" y="1196.9" width="10" height="1.5" fill="#e0e0e0" rx="0" />
<rect x="1686.2" y="1195.7" width="129" height="4.6" fill="#5a5a5a" rx="2.3" />
<circle cx="1752.3" cy="1198" r="10.2" fill="#9c9c9c"/>
<path d="M1830 1192.3 V1203.7 M1824.3 1198 H1835.7" stroke="#e0e0e0" stroke-width="1.5"/>
<text x="1857.8" y="1203.4" font-size="15" font-weight="normal" fill="#dedede" stroke="#dedede" stroke-width="0.15" textLength="39.0" lengthAdjust="spacingAndGlyphs" >107%</text>
<path d="M1925.5 1194.5 V1189.2 H1930.8 M1925.8 1189.5 L1930.8 1194.5 M1942.6 1194.5 V1189.2 H1937.3 M1942.3 1189.5 L1937.3 1194.5 M1925.5 1201.3 V1206.6 H1930.8 M1925.8 1206.3 L1930.8 1201.3 M1942.6 1201.3 V1206.6 H1937.3 M1942.3 1206.3 L1937.3 1201.3" fill="none" stroke="#f0f0f0" stroke-width="1.6"/>
<path d="M472.86 251.4 V257.3 M485.35 245 V257.3 M497.84 251.4 V257.3 M510.33 251.4 V257.3 M522.81 251.4 V257.3 M535.30 251.4 V257.3 M547.79 251.4 V257.3 M560.27 251.4 V257.3 M572.76 251.4 V257.3 M585.25 245 V257.3 M597.74 251.4 V257.3 M610.23 251.4 V257.3 M622.71 251.4 V257.3 M635.20 251.4 V257.3 M647.69 251.4 V257.3 M660.17 251.4 V257.3 M672.66 251.4 V257.3 M685.15 245 V257.3 M697.64 251.4 V257.3 M710.12 251.4 V257.3 M722.61 251.4 V257.3 M735.10 251.4 V257.3 M747.59 251.4 V257.3 M760.08 251.4 V257.3 M772.56 251.4 V257.3 M785.05 245 V257.3 M797.54 251.4 V257.3 M810.03 251.4 V257.3 M822.51 251.4 V257.3 M835.00 251.4 V257.3 M847.49 251.4 V257.3 M859.98 251.4 V257.3 M872.46 251.4 V257.3 M884.95 245 V257.3 M897.44 251.4 V257.3 M909.93 251.4 V257.3 M922.41 251.4 V257.3 M934.90 251.4 V257.3 M947.39 251.4 V257.3 M959.88 251.4 V257.3 M972.36 251.4 V257.3 M984.85 245 V257.3 M997.34 251.4 V257.3 M1009.83 251.4 V257.3 M1022.31 251.4 V257.3 M1034.80 251.4 V257.3 M1047.29 251.4 V257.3 M1059.78 251.4 V257.3 M1072.26 251.4 V257.3 M1084.75 245 V257.3 M1097.24 251.4 V257.3 M1109.73 251.4 V257.3 M1122.21 251.4 V257.3 M1134.70 251.4 V257.3 M1147.19 251.4 V257.3 M1159.67 251.4 V257.3 M1172.16 251.4 V257.3 M1184.65 245 V257.3 M1197.14 251.4 V257.3 M1209.62 251.4 V257.3 M1222.11 251.4 V257.3 M1234.60 251.4 V257.3 M1247.09 251.4 V257.3 M1259.58 251.4 V257.3 M1272.06 251.4 V257.3 M1284.55 245 V257.3 M1297.04 251.4 V257.3 M1309.53 251.4 V257.3 M1322.01 251.4 V257.3 M1334.50 251.4 V257.3 M1346.99 251.4 V257.3 M1359.48 251.4 V257.3 M1371.96 251.4 V257.3 M1384.45 245 V257.3 M1396.94 251.4 V257.3 M1409.43 251.4 V257.3 M1421.91 251.4 V257.3 M1434.40 251.4 V257.3 M1446.89 251.4 V257.3 M1459.38 251.4 V257.3 M1471.86 251.4 V257.3 M1484.35 245 V257.3 M1496.84 251.4 V257.3 M1509.33 251.4 V257.3 M1521.81 251.4 V257.3 M1534.30 251.4 V257.3 M1546.79 251.4 V257.3 M1559.28 251.4 V257.3 M1571.76 251.4 V257.3 M1584.25 245 V257.3 M1596.74 251.4 V257.3 M1609.23 251.4 V257.3 M1621.71 251.4 V257.3 M1634.20 251.4 V257.3 M1646.69 251.4 V257.3 M1659.18 251.4 V257.3 M1671.66 251.4 V257.3 M1684.15 245 V257.3 M1696.64 251.4 V257.3 M1709.12 251.4 V257.3 M1721.61 251.4 V257.3 M1734.10 251.4 V257.3 M1746.59 251.4 V257.3 M1759.08 251.4 V257.3 M1771.56 251.4 V257.3 M1784.05 245 V257.3 M1796.54 251.4 V257.3 M469.7 242 V262 M1799.6 242 V262" stroke="#a9a9a9" stroke-width="1.1" fill="none"/>
<text x="535.3" y="247.9" font-size="12.8" fill="#e2e2e2" text-anchor="middle">6</text>
<text x="635.2" y="247.9" font-size="12.8" fill="#e2e2e2" text-anchor="middle">5</text>
<text x="735.1" y="247.9" font-size="12.8" fill="#e2e2e2" text-anchor="middle">4</text>
<text x="835.0" y="247.9" font-size="12.8" fill="#e2e2e2" text-anchor="middle">3</text>
<text x="934.9" y="247.9" font-size="12.8" fill="#e2e2e2" text-anchor="middle">2</text>
<text x="1034.8" y="247.9" font-size="12.8" fill="#e2e2e2" text-anchor="middle">1</text>
<text x="1134.7" y="247.9" font-size="12.8" fill="#e2e2e2" text-anchor="middle">0</text>
<text x="1234.6" y="247.9" font-size="12.8" fill="#e2e2e2" text-anchor="middle">1</text>
<text x="1334.5" y="247.9" font-size="12.8" fill="#e2e2e2" text-anchor="middle">2</text>
<text x="1434.4" y="247.9" font-size="12.8" fill="#e2e2e2" text-anchor="middle">3</text>
<text x="1534.3" y="247.9" font-size="12.8" fill="#e2e2e2" text-anchor="middle">4</text>
<text x="1634.2" y="247.9" font-size="12.8" fill="#e2e2e2" text-anchor="middle">5</text>
<text x="1734.1" y="247.9" font-size="12.8" fill="#e2e2e2" text-anchor="middle">6</text>
<path d="M280.1 357.36 H285.3 M273.7 369.85 H285.3 M280.1 382.34 H285.3 M280.1 394.82 H285.3 M280.1 407.31 H285.3 M280.1 419.80 H285.3 M280.1 432.29 H285.3 M280.1 444.77 H285.3 M280.1 457.26 H285.3 M273.7 469.75 H285.3 M280.1 482.24 H285.3 M280.1 494.73 H285.3 M280.1 507.21 H285.3 M280.1 519.70 H285.3 M280.1 532.19 H285.3 M280.1 544.67 H285.3 M280.1 557.16 H285.3 M273.7 569.65 H285.3 M280.1 582.14 H285.3 M280.1 594.62 H285.3 M280.1 607.11 H285.3 M280.1 619.60 H285.3 M280.1 632.09 H285.3 M280.1 644.58 H285.3 M280.1 657.06 H285.3 M273.7 669.55 H285.3 M280.1 682.04 H285.3 M280.1 694.52 H285.3 M280.1 707.01 H285.3 M280.1 719.50 H285.3 M280.1 731.99 H285.3 M280.1 744.48 H285.3 M280.1 756.96 H285.3 M273.7 769.45 H285.3 M280.1 781.94 H285.3 M280.1 794.42 H285.3 M280.1 806.91 H285.3 M280.1 819.40 H285.3 M280.1 831.89 H285.3 M280.1 844.38 H285.3 M280.1 856.86 H285.3 M273.7 869.35 H285.3 M280.1 881.84 H285.3 M280.1 894.33 H285.3 M280.1 906.81 H285.3 M280.1 919.30 H285.3 M280.1 931.79 H285.3 M280.1 944.27 H285.3 M280.1 956.76 H285.3 M273.7 969.25 H285.3 M280.1 981.74 H285.3 M280.1 994.23 H285.3 M280.1 1006.71 H285.3 M280.1 1019.20 H285.3 M280.1 1031.69 H285.3 M280.1 1044.17 H285.3 M280.1 1056.66 H285.3 M273.7 1069.15 H285.3 M280.1 1081.64 H285.3 M271.2 345.4 H289.9 M271.2 1093.5 H289.9" stroke="#a9a9a9" stroke-width="1.1" fill="none"/>
<text x="0" y="0" font-size="12.8" fill="#e2e2e2" text-anchor="middle" transform="translate(276.3 419.8) rotate(-90)">3</text>
<text x="0" y="0" font-size="12.8" fill="#e2e2e2" text-anchor="middle" transform="translate(276.3 519.7) rotate(-90)">2</text>
<text x="0" y="0" font-size="12.8" fill="#e2e2e2" text-anchor="middle" transform="translate(276.3 619.6) rotate(-90)">1</text>
<text x="0" y="0" font-size="12.8" fill="#e2e2e2" text-anchor="middle" transform="translate(276.3 719.5) rotate(-90)">0</text>
<text x="0" y="0" font-size="12.8" fill="#e2e2e2" text-anchor="middle" transform="translate(276.3 819.4) rotate(-90)">1</text>
<text x="0" y="0" font-size="12.8" fill="#e2e2e2" text-anchor="middle" transform="translate(276.3 919.3) rotate(-90)">2</text>
<text x="0" y="0" font-size="12.8" fill="#e2e2e2" text-anchor="middle" transform="translate(276.3 1019.2) rotate(-90)">3</text>
<rect x="462" y="339" width="1348" height="765" fill="#3a3a3a" opacity="0.45" filter="url(#blur8)"/>
<rect x="471.3" y="294.6" width="40.2" height="40.8" rx="9.5" fill="#2a2a2a" stroke="#5e5e5e" stroke-width="1.2"/>
<path d="M491.8 304.6 Q492.50800000000004 309.792 497.7 310.5 Q492.50800000000004 311.208 491.8 316.4 Q491.092 311.208 485.90000000000003 310.5 Q491.092 309.792 491.8 304.6 Z" fill="#fafafa"/><path d="M497.5 313.59999999999997 Q497.956 316.94399999999996 501.3 317.4 Q497.956 317.856 497.5 321.2 Q497.044 317.856 493.7 317.4 Q497.044 316.94399999999996 497.5 313.59999999999997 Z" fill="#fafafa"/>
<path d="M482.3 319 L486.8 314.5 M486.4 320.1 L489.4 317.1 M482.3 324.2 L484.3 322.1 M487.7 324.4 L491 321" stroke="#fafafa" stroke-width="2.1" stroke-linecap="round"/>
<g id="slidecontent">
<rect x="469" y="345.4" width="1334" height="751.2" fill="#ffffff"/>
<g id="logo">
<circle cx="553.9" cy="418.5" r="46" fill="#fff" stroke="#050505" stroke-width="6"/>
<path d="M528 428 Q529 450 554.5 457 Q580 450 581 428" fill="#ececec" stroke="#b0b0b0" stroke-width="0.9"/>
<path d="M537 440 Q546 454 554.5 455 Q563 454 572 440" fill="none" stroke="#c4c4c4" stroke-width="0.9"/>
<path d="M532 386 Q523 389 518 398 Q514.5 407 517 414 Q521 423 527 429 Q531 432 534 430 Q535 412 533 396 Z" fill="#8e8e8e"/>
<path d="M577 386 Q586 389 591 398 Q594.5 407 592 414 Q588 423 582 429 Q578 432 575 430 Q574 412 576 396 Z" fill="#8e8e8e"/>
<path d="M517 412 Q521 423 527 429 Q531 432 534 430 Q533 420 530 414 Q524 410 517 412 Z" fill="#2a2a2a"/>
<path d="M592 412 Q588 423 582 429 Q578 432 575 430 Q576 420 579 414 Q585 410 592 412 Z" fill="#2a2a2a"/>
<path d="M521 398 Q525 392 529 392 Q527 402 523 408 Z" fill="#cfcfcf"/><path d="M588 398 Q584 392 580 392 Q582 402 586 408 Z" fill="#cfcfcf"/>
<path d="M549 384 Q539 384 534 388 Q531 401 533 415 Q535 429 540 438 L544 437 Q541 426 542 415 Q543.5 404 549.5 397 Z" fill="#1c1c1c"/>
<path d="M560 384 Q570 384 575 388 Q578 401 576 415 Q574 429 569 438 L565 437 Q568 426 567 415 Q565.5 404 559.5 397 Z" fill="#1c1c1c"/>
<path d="M535 400 Q534 415 537 430" stroke="#9a9a9a" stroke-width="1.3" fill="none"/><path d="M574 400 Q575 415 572 430" stroke="#9a9a9a" stroke-width="1.3" fill="none"/>
<ellipse cx="542.3" cy="405.5" rx="2.3" ry="1.7" fill="#9a9a9a"/><ellipse cx="566.5" cy="405.5" rx="2.3" ry="1.7" fill="#9a9a9a"/>
<path d="M549 384 Q554.8 382.5 560 384 L559.5 394 Q558.5 401 562 407 Q567.5 413 568.5 425 Q569 436 565.5 440.5 H544 Q540.5 436 541 425 Q542 413 547.5 407 Q551 401 550 394 Z" fill="#fbfbfb"/>
<path d="M542 421 Q543.5 432 546 439 M567.5 421 Q566 432 563.5 439" stroke="#777" stroke-width="0.9" fill="none"/>
<ellipse cx="554.8" cy="418" rx="7" ry="6.2" fill="#111"/>
<ellipse cx="552" cy="415.8" rx="1.6" ry="1" fill="#6a6a6a"/>
<path d="M546 433 Q554.8 426 563.5 433 Q554.8 436.5 546 433 Z" fill="#1e1e1e"/>
<path d="M548 435 Q554.8 432 561.5 435 Q554.8 440 548 435 Z" fill="#d8d8d8"/>
<path d="M541.5 438.5 Q545 444.5 549 441.5 M560.5 441.5 Q564.5 444.5 568 438.5" stroke="#111" stroke-width="2.4" fill="none" stroke-linecap="round"/>
</g>
<text x="613.2" y="433.6" font-size="44.8" font-weight="bold" fill="#050505" textLength="500.0" lengthAdjust="spacingAndGlyphs" >Intelligence by Intent</text>
<rect x="469" y="491" width="1334" height="424.6" fill="#d2a97f"/>
<rect x="955" y="491" width="848" height="1" fill="#fff"/>
<clipPath id="bandclip"><rect x="469" y="491" width="1334" height="424.6"/></clipPath>
<g clip-path="url(#bandclip)">
<g id="dog">
<polygon points="1208,735 1222,740 1240,786 1262,808 1304,833 1390,829 1432,803 1468,780 1476,807 1490,835 1512,863 1521,916 1159,915 1153,893 1164,863 1155,833 1170,790 1200,760" fill="#8a6a52" />
<polygon points="1208,745 1224,740 1246,790 1262,808 1250,830 1240,916 1159,915 1153,893 1164,863 1155,833 1170,790 1195,765" fill="#cf9a62" />
<g><polygon points="1221.3,761.7 1217.7,746.4 1230.6,751.2" fill="#e8c8a0"/><polygon points="1153.7,832.3 1168.5,838.2 1159.2,853.0" fill="#d09050"/><polygon points="1210.9,853.2 1220.8,844.9 1218.4,859.0" fill="#8a5a3a"/><polygon points="1191.2,778.6 1196.6,787.3 1186.3,786.2" fill="#e6d6c0"/><polygon points="1170.5,819.9 1152.6,812.6 1172.7,801.2" fill="#a85c20"/><polygon points="1189.2,795.2 1198.5,807.3 1181.9,808.0" fill="#efe6da"/><polygon points="1222.2,927.9 1212.3,911.8 1230.7,909.5" fill="#c7782e"/><polygon points="1165.9,793.1 1172.2,781.2 1185.1,792.1" fill="#e8c8a0"/><polygon points="1206.2,797.5 1198.4,813.4 1188.8,794.0" fill="#efe6da"/><polygon points="1215.2,856.1 1202.8,848.2 1213.3,838.4" fill="#e8c8a0"/><polygon points="1189.4,818.8 1195.3,802.9 1202.0,812.6" fill="#d09050"/><polygon points="1220.6,908.4 1199.8,912.9 1211.7,897.2" fill="#e6d6c0"/><polygon points="1207.7,827.2 1199.7,825.5 1201.4,818.7" fill="#a85c20"/><polygon points="1164.3,832.0 1172.1,833.1 1170.7,838.9" fill="#b56a28"/><polygon points="1209.7,886.9 1204.2,871.3 1219.1,873.9" fill="#b56a28"/><polygon points="1185.4,829.2 1173.0,838.4 1165.7,816.9" fill="#a85c20"/><polygon points="1259.4,808.9 1249.9,800.2 1263.1,802.1" fill="#a85c20"/><polygon points="1224.8,891.1 1232.0,907.6 1210.2,903.5" fill="#e8c8a0"/><polygon points="1203.8,874.4 1198.3,870.6 1206.8,866.3" fill="#8a5a3a"/><polygon points="1236.3,805.8 1215.1,802.4 1230.7,795.0" fill="#b56a28"/><polygon points="1174.4,789.7 1185.9,785.1 1181.3,798.0" fill="#e8c8a0"/><polygon points="1203.6,886.4 1217.9,885.4 1210.4,901.5" fill="#8a5a3a"/><polygon points="1215.1,776.5 1219.4,790.8 1207.3,786.9" fill="#b56a28"/><polygon points="1218.5,816.5 1236.8,810.9 1236.1,825.6" fill="#b56a28"/><polygon points="1168.9,822.9 1161.5,813.4 1169.8,813.1" fill="#a85c20"/><polygon points="1165.4,907.3 1152.0,889.9 1178.1,891.6" fill="#e8c8a0"/><polygon points="1196.1,807.1 1198.4,797.9 1203.4,803.8" fill="#e6d6c0"/><polygon points="1167.4,896.5 1164.5,906.8 1158.4,897.7" fill="#efe6da"/><polygon points="1189.6,836.0 1202.4,829.4 1198.5,842.1" fill="#c7782e"/><polygon points="1223.7,874.7 1224.1,885.4 1215.5,879.8" fill="#efe6da"/><polygon points="1229.9,748.3 1223.3,761.4 1212.9,739.7" fill="#b56a28"/><polygon points="1184.0,833.1 1179.0,823.8 1189.4,828.7" fill="#8a5a3a"/><polygon points="1174.9,809.1 1192.9,822.5 1177.9,826.9" fill="#b56a28"/><polygon points="1183.3,879.8 1196.9,881.6 1191.6,899.0" fill="#efe6da"/><polygon points="1235.7,806.2 1226.3,814.1 1220.6,803.4" fill="#a85c20"/><polygon points="1210.6,791.6 1203.4,773.9 1223.1,781.5" fill="#c7782e"/><polygon points="1158.4,881.7 1166.8,882.3 1159.6,890.2" fill="#d09050"/><polygon points="1214.1,878.5 1217.6,853.6 1232.3,870.1" fill="#e8c8a0"/><polygon points="1226.0,881.9 1238.8,879.0 1235.1,889.9" fill="#b56a28"/><polygon points="1218.5,912.5 1224.1,902.5 1229.2,912.6" fill="#e6d6c0"/><polygon points="1225.5,822.7 1240.9,826.6 1232.0,838.9" fill="#b56a28"/><polygon points="1180.1,843.6 1181.8,859.2 1171.4,853.0" fill="#d09050"/><polygon points="1179.4,850.6 1202.6,850.5 1190.6,863.3" fill="#8a5a3a"/><polygon points="1175.6,837.0 1184.8,819.5 1186.4,836.5" fill="#8a5a3a"/><polygon points="1178.3,826.6 1153.7,835.0 1148.4,820.3" fill="#efe6da"/><polygon points="1234.0,816.2 1250.7,831.4 1239.2,841.5" fill="#8a5a3a"/><polygon points="1194.3,874.7 1194.1,861.3 1207.7,869.8" fill="#b56a28"/><polygon points="1224.9,906.2 1229.5,892.3 1236.7,899.7" fill="#c7782e"/><polygon points="1230.1,850.5 1221.1,857.4 1222.3,848.9" fill="#e8c8a0"/><polygon points="1211.9,860.9 1216.5,868.9 1209.9,872.3" fill="#d09050"/><polygon points="1169.5,820.5 1166.4,810.4 1178.5,809.2" fill="#e6d6c0"/><polygon points="1173.1,911.1 1169.1,897.5 1179.1,893.9" fill="#a85c20"/><polygon points="1214.0,790.9 1215.7,803.1 1207.3,795.6" fill="#efe6da"/><polygon points="1176.3,909.3 1184.5,905.7 1186.8,914.1" fill="#8a5a3a"/><polygon points="1209.5,788.8 1192.2,806.8 1197.1,783.5" fill="#e6d6c0"/><polygon points="1204.7,898.9 1202.1,909.7 1182.5,901.0" fill="#8a5a3a"/><polygon points="1164.3,879.1 1156.4,877.0 1164.0,872.5" fill="#e8c8a0"/><polygon points="1224.5,758.6 1231.3,754.7 1232.5,762.6" fill="#8a5a3a"/><polygon points="1183.6,808.1 1172.0,795.6 1191.1,792.2" fill="#b56a28"/><polygon points="1205.1,869.1 1201.9,857.0 1213.6,854.0" fill="#e8c8a0"/><polygon points="1160.5,884.1 1179.4,867.6 1180.9,886.9" fill="#efe6da"/><polygon points="1174.9,841.9 1170.6,858.7 1160.1,844.6" fill="#c7782e"/><polygon points="1202.0,883.2 1205.4,900.5 1181.7,900.9" fill="#c7782e"/><polygon points="1195.8,866.3 1186.9,876.3 1177.3,856.1" fill="#b56a28"/><polygon points="1193.8,867.0 1200.8,879.3 1188.2,876.8" fill="#8a5a3a"/><polygon points="1247.6,873.6 1238.8,879.9 1241.9,870.6" fill="#efe6da"/><polygon points="1190.6,901.7 1194.9,909.5 1184.2,910.4" fill="#e6d6c0"/><polygon points="1197.7,918.6 1201.5,891.9 1220.5,908.7" fill="#efe6da"/><polygon points="1239.9,884.6 1240.7,869.1 1253.7,872.2" fill="#b56a28"/><polygon points="1189.1,854.8 1200.0,848.5 1198.3,861.4" fill="#e8c8a0"/><polygon points="1209.0,874.0 1199.1,859.3 1216.4,862.3" fill="#e6d6c0"/><polygon points="1238.8,797.6 1233.3,788.7 1242.7,788.0" fill="#b56a28"/><polygon points="1172.8,813.3 1200.4,796.3 1198.7,818.2" fill="#b56a28"/><polygon points="1242.0,813.3 1259.9,798.3 1263.4,815.3" fill="#b56a28"/><polygon points="1237.2,810.2 1249.7,809.8 1240.9,821.3" fill="#d09050"/><polygon points="1220.5,751.4 1230.4,756.0 1219.6,761.5" fill="#a85c20"/><polygon points="1227.1,890.6 1234.8,873.5 1244.1,881.0" fill="#a85c20"/><polygon points="1198.0,766.0 1205.4,764.1 1204.7,773.0" fill="#d09050"/><polygon points="1196.9,858.5 1208.4,878.5 1183.2,877.1" fill="#e8c8a0"/><polygon points="1235.9,889.1 1234.4,904.7 1221.0,895.3" fill="#d09050"/></g>
<polygon points="1195,826 1239,830 1225,863 1205,858" fill="#5a3418" />
<polygon points="1240,800 1280,825 1314,840 1318,916 1232,916 1228,860" fill="#e2d8ca" />
<g><polygon points="1263.6,810.0 1269.3,817.4 1259.3,821.4" fill="#f0ebe4"/><polygon points="1266.1,843.9 1272.2,857.2 1253.4,857.9" fill="#d6cabb"/><polygon points="1228.5,881.3 1224.2,869.4 1234.9,868.2" fill="#d6cabb"/><polygon points="1253.1,841.0 1262.7,829.1 1267.9,851.7" fill="#f0ebe4"/><polygon points="1240.0,852.8 1227.4,864.9 1230.0,853.4" fill="#ebe2d5"/><polygon points="1252.4,885.7 1264.0,899.0 1250.3,902.6" fill="#b8aa98"/><polygon points="1248.7,892.7 1254.4,889.3 1255.2,897.6" fill="#d6cabb"/><polygon points="1261.5,881.2 1258.8,868.4 1271.5,870.0" fill="#ebe2d5"/><polygon points="1282.9,878.3 1266.2,873.6 1276.5,852.6" fill="#b8aa98"/><polygon points="1241.2,845.0 1236.1,837.4 1245.6,833.4" fill="#b8aa98"/><polygon points="1309.0,895.7 1319.2,909.5 1306.1,908.3" fill="#ebe2d5"/><polygon points="1251.9,875.3 1247.0,879.3 1246.4,871.3" fill="#d6cabb"/><polygon points="1267.0,898.6 1258.8,899.5 1256.5,891.7" fill="#c9bba8"/><polygon points="1261.9,827.2 1268.6,830.7 1260.3,834.3" fill="#d6cabb"/><polygon points="1253.7,827.2 1236.5,825.3 1246.6,806.2" fill="#ebe2d5"/><polygon points="1260.9,832.6 1259.5,839.5 1251.9,832.2" fill="#ebe2d5"/><polygon points="1236.7,911.5 1251.8,917.9 1243.1,920.1" fill="#b8aa98"/><polygon points="1302.7,874.1 1283.6,885.6 1283.5,872.7" fill="#d6cabb"/><polygon points="1237.8,909.2 1243.7,898.6 1247.3,911.5" fill="#b8aa98"/><polygon points="1276.7,888.3 1272.8,905.5 1259.8,898.8" fill="#f0ebe4"/><polygon points="1317.7,884.1 1313.3,883.2 1319.6,877.0" fill="#d6cabb"/><polygon points="1311.7,905.1 1293.5,896.6 1298.3,887.4" fill="#f0ebe4"/><polygon points="1321.1,913.6 1306.8,909.5 1316.9,895.1" fill="#c9bba8"/><polygon points="1257.7,854.4 1253.0,847.4 1261.4,849.1" fill="#c9bba8"/><polygon points="1257.5,857.9 1256.7,841.0 1277.0,846.6" fill="#d6cabb"/><polygon points="1264.7,855.3 1274.7,861.7 1258.7,862.4" fill="#b8aa98"/><polygon points="1263.7,893.7 1256.9,902.5 1252.5,894.4" fill="#f0ebe4"/><polygon points="1277.8,917.9 1261.1,914.5 1275.2,907.3" fill="#f0ebe4"/><polygon points="1251.3,835.6 1269.5,829.2 1266.2,841.9" fill="#b8aa98"/><polygon points="1288.1,847.9 1280.8,839.5 1289.3,832.8" fill="#b8aa98"/><polygon points="1246.3,831.3 1259.0,843.6 1240.9,846.0" fill="#d6cabb"/><polygon points="1290.9,875.5 1287.1,862.6 1297.7,863.6" fill="#d6cabb"/><polygon points="1261.2,905.9 1269.1,918.2 1256.7,921.8" fill="#f0ebe4"/><polygon points="1269.1,835.6 1263.3,818.9 1280.2,818.9" fill="#b8aa98"/><polygon points="1276.0,862.4 1292.2,876.8 1278.7,883.3" fill="#f0ebe4"/><polygon points="1278.3,841.9 1259.1,838.5 1267.5,827.7" fill="#ebe2d5"/><polygon points="1279.6,871.2 1272.0,890.5 1265.4,876.8" fill="#d6cabb"/><polygon points="1230.8,894.0 1250.8,880.4 1247.3,902.4" fill="#c9bba8"/><polygon points="1275.7,858.4 1267.5,843.2 1285.0,844.6" fill="#f0ebe4"/><polygon points="1254.1,848.5 1245.9,846.3 1248.9,840.4" fill="#ebe2d5"/></g>
<polygon points="1314,833 1390,829 1411,835 1420,916 1318,916" fill="#6a5040" />
<g><polygon points="1414.7,870.0 1420.1,878.2 1407.0,874.1" fill="#2a1c16"/><polygon points="1388.1,903.2 1372.2,890.0 1391.8,883.9" fill="#9a8a7e"/><polygon points="1329.8,895.5 1331.4,906.9 1322.6,902.5" fill="#9a8a7e"/><polygon points="1394.5,869.4 1388.5,853.9 1406.1,856.7" fill="#2a1c16"/><polygon points="1318.0,887.4 1325.0,906.9 1309.8,911.6" fill="#9a8a7e"/><polygon points="1347.9,873.8 1345.8,889.0 1336.0,881.6" fill="#c06a30"/><polygon points="1407.0,869.7 1416.2,884.8 1401.4,889.8" fill="#9a8a7e"/><polygon points="1408.1,891.4 1397.7,889.2 1404.4,880.7" fill="#9a8a7e"/><polygon points="1368.3,862.1 1369.3,880.6 1356.2,868.7" fill="#8a7a70"/><polygon points="1364.9,924.8 1353.0,918.5 1368.7,907.6" fill="#3a281e"/><polygon points="1379.2,876.3 1360.5,882.9 1363.4,861.2" fill="#c06a30"/><polygon points="1371.2,912.8 1369.0,903.7 1378.6,908.7" fill="#8a7a70"/><polygon points="1402.2,861.0 1409.4,855.5 1407.0,863.3" fill="#3a281e"/><polygon points="1351.1,875.2 1361.0,869.3 1357.0,886.1" fill="#3a281e"/><polygon points="1390.9,900.4 1407.6,906.0 1398.4,918.2" fill="#2a1c16"/><polygon points="1384.6,838.7 1379.4,850.5 1374.3,840.1" fill="#8a7a70"/><polygon points="1368.5,855.5 1375.1,842.9 1380.6,852.2" fill="#3a281e"/><polygon points="1399.1,891.4 1409.0,899.2 1393.5,899.4" fill="#7a5a40"/><polygon points="1361.1,862.5 1367.3,862.8 1362.3,868.2" fill="#3a281e"/><polygon points="1335.4,847.1 1331.0,831.3 1345.4,835.1" fill="#9a8a7e"/><polygon points="1402.1,888.2 1408.9,893.3 1400.7,896.8" fill="#3a281e"/><polygon points="1313.6,900.9 1332.8,903.3 1315.0,914.7" fill="#8a7a70"/><polygon points="1346.2,872.6 1361.5,878.4 1348.1,884.6" fill="#2a1c16"/><polygon points="1395.7,862.9 1402.1,872.9 1389.6,869.7" fill="#c06a30"/><polygon points="1395.1,824.2 1394.6,834.0 1384.3,831.2" fill="#7a5a40"/><polygon points="1399.6,858.4 1396.2,849.1 1403.0,849.3" fill="#c06a30"/><polygon points="1320.8,908.1 1337.7,906.8 1331.9,923.2" fill="#9a8a7e"/><polygon points="1383.0,896.1 1371.7,883.9 1381.7,879.0" fill="#3a281e"/><polygon points="1347.1,872.3 1339.7,888.3 1329.8,879.3" fill="#9a8a7e"/><polygon points="1347.8,874.2 1347.8,885.8 1338.1,879.1" fill="#2a1c16"/><polygon points="1393.9,847.6 1388.0,835.3 1405.5,846.4" fill="#c06a30"/><polygon points="1342.6,913.2 1331.9,911.1 1339.1,904.2" fill="#7a5a40"/><polygon points="1350.2,834.1 1354.4,825.4 1358.4,834.3" fill="#3a281e"/><polygon points="1393.2,844.5 1383.9,834.6 1394.9,835.1" fill="#7a5a40"/><polygon points="1326.7,849.5 1322.5,858.6 1311.8,846.5" fill="#2a1c16"/><polygon points="1328.5,839.8 1317.1,853.2 1311.3,839.2" fill="#8a7a70"/><polygon points="1346.0,862.2 1359.1,855.5 1359.4,869.4" fill="#7a5a40"/><polygon points="1420.2,844.4 1415.3,856.0 1401.0,839.8" fill="#9a8a7e"/><polygon points="1324.9,919.2 1314.2,911.6 1325.9,908.2" fill="#7a5a40"/><polygon points="1364.3,849.0 1351.8,839.3 1364.5,838.0" fill="#2a1c16"/><polygon points="1419.4,847.9 1403.2,848.6 1406.1,829.7" fill="#7a5a40"/><polygon points="1338.2,853.2 1343.1,841.6 1348.6,849.8" fill="#2a1c16"/><polygon points="1404.9,860.6 1398.4,863.8 1399.1,854.2" fill="#c06a30"/><polygon points="1337.0,910.5 1325.3,895.3 1342.2,898.4" fill="#7a5a40"/><polygon points="1339.4,875.3 1345.9,887.5 1324.9,884.8" fill="#3a281e"/><polygon points="1367.8,854.6 1376.5,857.2 1369.1,866.6" fill="#7a5a40"/><polygon points="1338.5,907.4 1327.3,905.0 1336.9,894.8" fill="#3a281e"/><polygon points="1364.7,846.7 1351.1,863.8 1344.2,848.0" fill="#9a8a7e"/><polygon points="1355.7,876.4 1369.5,867.7 1370.9,879.1" fill="#3a281e"/><polygon points="1386.3,845.2 1401.7,849.4 1392.9,860.2" fill="#8a7a70"/></g>
<polygon points="1411,830 1432,815 1462,830 1484,835 1512,863 1521,916 1420,916" fill="#3a261c" />
<g><polygon points="1426.0,872.4 1416.3,861.9 1430.8,865.0" fill="#d8ccbe"/><polygon points="1474.5,858.3 1453.5,864.2 1450.2,845.2" fill="#2a1a14"/><polygon points="1492.7,856.6 1494.8,841.3 1503.8,851.7" fill="#2a1a14"/><polygon points="1437.7,835.4 1441.2,825.3 1455.1,828.2" fill="#4a3226"/><polygon points="1438.4,909.7 1420.0,924.2 1415.2,910.9" fill="#6a5a52"/><polygon points="1511.2,871.3 1517.4,881.0 1506.2,880.6" fill="#2a1a14"/><polygon points="1441.9,875.7 1448.7,877.1 1444.2,884.5" fill="#2a1a14"/><polygon points="1454.6,901.0 1476.5,901.3 1468.4,917.2" fill="#4a3226"/><polygon points="1472.2,837.4 1484.6,827.0 1489.4,839.5" fill="#d8ccbe"/><polygon points="1477.7,905.9 1471.9,919.5 1462.2,909.8" fill="#4a3226"/><polygon points="1447.3,896.9 1441.0,897.6 1442.4,886.5" fill="#2a1a14"/><polygon points="1477.7,909.8 1470.2,922.4 1462.3,909.4" fill="#d8ccbe"/><polygon points="1433.5,898.3 1413.8,912.0 1416.5,894.7" fill="#1e1410"/><polygon points="1502.9,872.9 1489.6,882.8 1490.6,868.1" fill="#1e1410"/><polygon points="1482.5,850.0 1486.0,839.5 1496.0,847.5" fill="#1e1410"/><polygon points="1463.8,839.6 1452.4,838.1 1461.6,825.5" fill="#4a3226"/><polygon points="1462.2,908.6 1452.8,908.7 1456.8,901.0" fill="#d8ccbe"/><polygon points="1495.1,893.9 1503.1,883.4 1507.7,890.9" fill="#1e1410"/><polygon points="1444.6,847.0 1459.1,850.8 1451.4,867.1" fill="#6a5a52"/><polygon points="1485.1,893.5 1485.0,886.9 1491.3,891.9" fill="#6a5a52"/><polygon points="1494.9,922.2 1501.7,903.8 1509.8,917.1" fill="#8a7a70"/><polygon points="1468.7,874.4 1483.3,882.5 1465.5,883.0" fill="#2a1a14"/><polygon points="1470.4,882.3 1479.2,877.6 1475.7,888.7" fill="#1e1410"/><polygon points="1470.8,870.2 1464.3,869.0 1469.3,861.4" fill="#8a7a70"/><polygon points="1493.1,855.5 1486.8,838.8 1504.4,849.5" fill="#1e1410"/><polygon points="1443.5,853.6 1431.3,861.8 1433.9,847.1" fill="#2a1a14"/><polygon points="1506.8,891.4 1515.5,897.7 1509.8,905.2" fill="#4a3226"/><polygon points="1462.7,858.7 1453.5,863.8 1447.0,847.3" fill="#1e1410"/><polygon points="1478.9,854.3 1465.3,858.4 1467.1,848.1" fill="#4a3226"/><polygon points="1459.2,839.7 1463.0,845.8 1454.1,842.7" fill="#1e1410"/><polygon points="1499.0,899.7 1503.3,891.7 1507.8,899.4" fill="#4a3226"/><polygon points="1516.5,884.1 1495.5,889.6 1498.5,873.8" fill="#4a3226"/><polygon points="1467.6,862.6 1471.7,873.6 1463.3,872.1" fill="#4a3226"/><polygon points="1437.4,903.6 1433.5,910.5 1427.4,904.6" fill="#8a7a70"/><polygon points="1443.2,852.1 1463.5,839.9 1463.5,855.7" fill="#8a7a70"/><polygon points="1485.0,899.7 1492.9,906.4 1485.6,909.4" fill="#6a5a52"/><polygon points="1518.9,887.6 1507.5,896.7 1508.8,882.8" fill="#6a5a52"/><polygon points="1481.5,918.9 1473.5,903.1 1489.6,903.8" fill="#2a1a14"/><polygon points="1508.6,897.6 1500.9,898.6 1498.0,887.1" fill="#4a3226"/><polygon points="1481.9,854.0 1497.6,840.7 1505.2,855.3" fill="#1e1410"/><polygon points="1459.3,840.4 1468.8,850.7 1456.4,858.0" fill="#4a3226"/><polygon points="1469.5,826.3 1475.8,842.6 1455.5,837.2" fill="#2a1a14"/><polygon points="1424.3,847.3 1434.5,849.0 1427.7,853.1" fill="#8a7a70"/><polygon points="1456.5,913.7 1456.0,904.6 1467.3,910.3" fill="#4a3226"/><polygon points="1462.4,836.3 1448.6,840.4 1449.4,830.2" fill="#2a1a14"/><polygon points="1426.9,865.8 1420.2,852.1 1438.5,857.0" fill="#6a5a52"/><polygon points="1424.7,869.3 1415.8,859.8 1430.1,857.4" fill="#8a7a70"/><polygon points="1485.7,876.8 1492.5,881.7 1482.8,881.4" fill="#8a7a70"/><polygon points="1427.7,886.0 1436.1,901.0 1421.1,901.4" fill="#6a5a52"/><polygon points="1427.2,825.9 1420.8,833.6 1406.6,820.3" fill="#6a5a52"/></g>
<g><polygon points="1502.2,851.4 1495.3,846.3 1503.7,846.5" fill="#a89a8c"/><polygon points="1505.4,885.2 1512.6,872.4 1518.8,882.7" fill="#a89a8c"/><polygon points="1483.4,826.4 1481.2,816.9 1491.6,826.4" fill="#a89a8c"/><polygon points="1518.3,887.2 1521.8,899.6 1510.0,895.3" fill="#c87a3a"/><polygon points="1502.1,875.4 1505.5,881.0 1497.8,879.3" fill="#a89a8c"/><polygon points="1498.4,819.3 1493.9,816.8 1499.2,813.0" fill="#f0eae2"/><polygon points="1495.3,828.6 1498.6,841.5 1487.7,837.4" fill="#e2d8cc"/><polygon points="1495.1,894.9 1504.6,890.9 1504.5,897.5" fill="#f0eae2"/><polygon points="1479.3,811.3 1484.7,811.4 1480.4,815.1" fill="#a89a8c"/><polygon points="1500.1,895.5 1489.3,886.0 1502.8,884.4" fill="#f0eae2"/><polygon points="1491.2,832.3 1497.0,829.1 1497.3,836.6" fill="#a89a8c"/><polygon points="1485.2,783.6 1486.2,789.4 1478.5,785.6" fill="#f0eae2"/><polygon points="1507.5,846.6 1503.7,855.0 1495.2,846.9" fill="#f0eae2"/><polygon points="1480.0,789.6 1493.1,785.5 1485.6,798.0" fill="#f0eae2"/><polygon points="1488.6,813.8 1480.0,804.0 1489.8,805.0" fill="#c87a3a"/></g>
<g><polygon points="1158.5,555.7 1166.0,558.2 1163.6,563.2" fill="#5a5c60"/><polygon points="1170.4,563.7 1174.5,548.9 1178.2,558.9" fill="#141414"/><polygon points="1193.0,548.1 1192.4,541.0 1204.9,543.1" fill="#3a3a3c"/><polygon points="1193.0,545.2 1182.1,551.7 1184.7,542.4" fill="#141414"/><polygon points="1224.6,523.6 1230.6,529.3 1225.5,529.3" fill="#2a2a2a"/><polygon points="1214.2,530.5 1222.5,527.2 1220.3,536.0" fill="#5a5c60"/><polygon points="1237.3,526.4 1232.4,525.0 1235.3,520.9" fill="#8a8c90"/><polygon points="1245.6,519.8 1236.3,526.9 1237.9,517.7" fill="#5a5c60"/><polygon points="1254.9,515.6 1254.4,511.5 1257.8,512.9" fill="#141414"/><polygon points="1256.6,517.8 1244.0,512.0 1254.8,505.0" fill="#2a2a2a"/><polygon points="1321.1,510.7 1310.0,510.3 1310.1,502.0" fill="#2a2a2a"/><polygon points="1293.9,506.9 1297.7,513.0 1292.6,514.8" fill="#3a3a3c"/><polygon points="1342.0,501.5 1343.4,506.3 1336.4,504.2" fill="#2a2a2a"/><polygon points="1339.0,505.3 1330.2,518.5 1331.6,501.9" fill="#2a2a2a"/><polygon points="1347.8,511.3 1344.5,507.7 1354.2,501.8" fill="#5a5c60"/><polygon points="1358.4,506.2 1368.2,499.8 1367.1,509.0" fill="#2a2a2a"/><polygon points="1379.9,500.4 1385.3,501.3 1381.5,507.4" fill="#5a5c60"/><polygon points="1379.1,512.8 1373.2,505.7 1384.1,506.8" fill="#8a8c90"/><polygon points="1430.8,513.1 1432.1,519.0 1422.4,525.3" fill="#5a5c60"/><polygon points="1404.8,508.0 1411.3,498.9 1418.1,510.4" fill="#3a3a3c"/><polygon points="1440.0,527.7 1437.8,518.4 1443.8,524.2" fill="#141414"/><polygon points="1440.7,526.5 1425.0,525.3 1435.1,520.5" fill="#5a5c60"/><polygon points="1458.3,546.8 1453.1,544.2 1455.7,540.5" fill="#2a2a2a"/><polygon points="1473.4,558.0 1467.1,555.3 1473.7,551.2" fill="#2a2a2a"/><polygon points="1495.3,569.7 1484.8,561.2 1485.9,553.7" fill="#2a2a2a"/><polygon points="1476.2,559.8 1480.0,558.0 1480.1,562.9" fill="#8a8c90"/><polygon points="1508.1,571.2 1502.5,574.8 1502.2,567.6" fill="#3a3a3c"/><polygon points="1516.5,575.4 1530.4,582.3 1516.9,587.5" fill="#5a5c60"/><polygon points="1527.4,600.6 1517.7,602.8 1520.1,592.0" fill="#3a3a3c"/><polygon points="1527.2,600.6 1522.0,610.9 1515.4,603.9" fill="#3a3a3c"/><polygon points="1518.2,624.9 1511.5,614.6 1531.1,613.3" fill="#141414"/><polygon points="1522.1,619.7 1527.7,609.8 1532.7,616.5" fill="#5a5c60"/><polygon points="1519.8,650.7 1514.4,645.8 1523.9,644.2" fill="#2a2a2a"/><polygon points="1510.2,644.9 1516.7,634.3 1522.3,645.6" fill="#141414"/><polygon points="1511.3,672.0 1504.1,676.3 1506.1,667.8" fill="#5a5c60"/><polygon points="1508.8,672.7 1508.5,667.8 1513.1,670.5" fill="#5a5c60"/><polygon points="1500.2,702.4 1492.5,691.7 1501.3,691.6" fill="#141414"/><polygon points="1490.4,703.7 1493.2,699.2 1495.9,704.8" fill="#141414"/><polygon points="1416.1,709.6 1419.3,713.5 1417.8,718.4" fill="#2a2a2a"/><polygon points="1250.4,709.9 1255.9,707.0 1259.2,717.2" fill="#3a3a3c"/><polygon points="1166.8,706.2 1177.7,696.4 1177.3,708.8" fill="#2a2a2a"/><polygon points="1163.2,691.9 1166.4,685.3 1169.6,688.8" fill="#5a5c60"/><polygon points="1156.0,671.7 1162.0,678.2 1150.1,680.8" fill="#2a2a2a"/><polygon points="1146.2,672.2 1153.1,666.0 1153.9,672.1" fill="#141414"/><polygon points="1148.9,655.9 1136.6,657.6 1140.8,652.1" fill="#2a2a2a"/><polygon points="1143.1,658.6 1150.5,666.2 1141.3,671.4" fill="#2a2a2a"/><polygon points="1134.3,626.5 1132.8,629.3 1130.2,625.5" fill="#8a8c90"/><polygon points="1134.0,633.6 1127.8,627.3 1133.9,621.9" fill="#8a8c90"/><polygon points="1131.1,600.6 1139.2,609.9 1127.0,606.5" fill="#5a5c60"/><polygon points="1128.6,617.0 1120.4,615.8 1124.8,613.4" fill="#3a3a3c"/><polygon points="1149.6,566.3 1155.1,568.7 1150.8,570.6" fill="#8a8c90"/><polygon points="1146.8,567.9 1155.1,566.1 1151.2,570.9" fill="#5a5c60"/></g>
<polygon points="1159,559 1181,557 1204,540 1230,527 1247,516 1282,512 1316,508 1346,508 1378,506 1406,506 1432,521 1449,542 1475,557 1497,566 1522,581 1525,607 1518,632 1514,658 1501,688 1488,710 1470,722 1468,790 1460,812 1432,818 1411,825 1389,829 1304,833 1282,820 1260,807 1239,786 1222,740 1208,735 1182,713 1164,688 1149,667 1140,645 1127,620 1136,590" fill="#232323" />
<clipPath id="headclip"><polygon points="1159,559 1181,557 1204,540 1230,527 1247,516 1282,512 1316,508 1346,508 1378,506 1406,506 1432,521 1449,542 1475,557 1497,566 1522,581 1525,607 1518,632 1514,658 1501,688 1488,710 1470,722 1468,790 1460,812 1432,818 1411,825 1389,829 1304,833 1282,820 1260,807 1239,786 1222,740 1208,735 1182,713 1164,688 1149,667 1140,645 1127,620 1136,590" fill="#000" /></clipPath>
<g clip-path="url(#headclip)">
<g><polygon points="1199.0,590.4 1176.9,590.0 1183.5,570.4" fill="#3a3a3c"/><polygon points="1177.4,584.4 1192.4,566.3 1189.2,597.1" fill="#2a2a2c"/><polygon points="1190.1,650.2 1178.8,644.5 1186.8,642.4" fill="#3a3a3c"/><polygon points="1214.5,672.3 1215.4,663.6 1221.5,669.4" fill="#3a3a3c"/><polygon points="1207.6,633.3 1189.2,635.5 1199.1,616.3" fill="#141416"/><polygon points="1210.7,611.1 1185.8,611.7 1194.9,600.9" fill="#2a2a2c"/><polygon points="1144.8,642.4 1127.2,639.8 1138.9,627.8" fill="#0e0e10"/><polygon points="1217.1,689.1 1199.8,681.5 1221.7,678.2" fill="#2a2a2c"/><polygon points="1160.1,661.3 1170.7,657.5 1166.0,668.1" fill="#5a5c60"/><polygon points="1215.1,557.7 1199.3,559.6 1201.7,544.2" fill="#141416"/><polygon points="1164.7,626.2 1160.6,618.6 1169.2,615.4" fill="#2a2a2c"/><polygon points="1196.0,679.8 1189.3,682.7 1187.0,674.4" fill="#3a3a3c"/><polygon points="1205.6,688.8 1212.3,698.3 1203.1,695.6" fill="#48494c"/><polygon points="1218.6,672.5 1219.6,701.3 1200.5,683.1" fill="#3a3a3c"/><polygon points="1202.8,701.8 1192.8,674.8 1221.6,683.6" fill="#5a5c60"/><polygon points="1206.7,662.5 1210.3,690.9 1185.9,676.6" fill="#0e0e10"/><polygon points="1214.8,537.2 1196.4,550.7 1198.1,532.3" fill="#2a2a2c"/><polygon points="1148.8,617.4 1129.6,628.9 1130.6,606.9" fill="#2a2a2c"/><polygon points="1136.1,611.3 1139.9,573.2 1160.5,594.2" fill="#2a2a2c"/><polygon points="1214.9,731.6 1205.2,738.3 1205.0,718.2" fill="#3a3a3c"/><polygon points="1197.1,663.7 1203.6,673.1 1194.2,673.8" fill="#48494c"/><polygon points="1178.4,659.5 1195.1,656.4 1189.2,669.9" fill="#3a3a3c"/><polygon points="1194.3,620.3 1187.0,637.1 1162.1,627.3" fill="#48494c"/><polygon points="1159.5,695.4 1155.7,677.6 1177.8,687.8" fill="#0e0e10"/><polygon points="1166.9,657.3 1190.5,662.5 1180.4,692.0" fill="#1e1e20"/><polygon points="1154.3,606.6 1133.9,608.7 1145.1,594.4" fill="#1e1e20"/><polygon points="1177.2,614.2 1175.5,627.4 1169.6,615.2" fill="#3a3a3c"/><polygon points="1136.2,611.2 1161.5,594.3 1166.7,624.0" fill="#48494c"/><polygon points="1146.5,583.9 1157.1,582.1 1155.2,591.8" fill="#141416"/><polygon points="1201.3,689.9 1192.3,702.7 1186.1,687.2" fill="#141416"/><polygon points="1183.8,632.1 1183.6,652.0 1163.2,635.0" fill="#2a2a2c"/><polygon points="1175.3,631.0 1177.1,611.1 1195.3,616.0" fill="#3a3a3c"/><polygon points="1221.9,701.2 1225.1,724.0 1197.8,713.4" fill="#48494c"/><polygon points="1179.5,687.9 1198.8,680.3 1200.5,704.4" fill="#3a3a3c"/><polygon points="1162.7,672.6 1162.8,680.7 1157.0,677.2" fill="#1e1e20"/><polygon points="1177.6,655.0 1186.9,650.0 1182.1,661.8" fill="#2a2a2c"/><polygon points="1202.2,639.4 1207.0,647.0 1197.5,646.1" fill="#3a3a3c"/><polygon points="1161.6,655.3 1152.9,630.1 1175.5,628.1" fill="#3a3a3c"/><polygon points="1198.7,654.3 1187.7,663.1 1181.0,648.7" fill="#2a2a2c"/><polygon points="1202.9,702.0 1185.5,684.7 1206.3,669.3" fill="#5a5c60"/><polygon points="1192.7,671.4 1196.3,655.8 1201.7,660.9" fill="#7a7c80"/><polygon points="1200.7,680.9 1197.2,696.8 1186.7,690.7" fill="#141416"/><polygon points="1201.8,649.7 1209.4,636.8 1217.4,644.3" fill="#0e0e10"/><polygon points="1204.6,678.0 1204.6,688.6 1196.2,679.5" fill="#3a3a3c"/><polygon points="1207.3,650.5 1207.7,638.7 1216.2,642.4" fill="#7a7c80"/><polygon points="1173.5,565.8 1150.5,562.5 1168.6,550.1" fill="#3a3a3c"/><polygon points="1187.7,697.6 1166.2,672.0 1190.3,663.9" fill="#141416"/><polygon points="1138.1,625.1 1147.8,634.3 1131.8,641.5" fill="#5a5c60"/><polygon points="1182.3,618.6 1166.0,634.2 1163.0,611.3" fill="#1e1e20"/><polygon points="1199.8,585.5 1177.0,571.8 1202.0,570.6" fill="#5a5c60"/></g>
<g><polygon points="1467.9,666.4 1482.4,671.2 1474.0,685.3" fill="#0e0e10"/><polygon points="1492.6,635.4 1480.6,628.2 1495.7,621.5" fill="#3a3a3c"/><polygon points="1470.1,656.9 1467.4,648.8 1476.5,645.3" fill="#1e1e20"/><polygon points="1491.7,702.1 1471.9,716.7 1476.1,693.9" fill="#0e0e10"/><polygon points="1518.3,624.4 1522.0,630.1 1508.5,631.6" fill="#141416"/><polygon points="1508.6,617.0 1496.5,598.8 1514.0,589.9" fill="#7a7c80"/><polygon points="1464.5,550.4 1455.1,559.5 1454.1,546.5" fill="#2a2a2c"/><polygon points="1452.2,612.9 1459.6,629.0 1446.9,627.4" fill="#5a5c60"/><polygon points="1494.7,591.8 1498.4,570.3 1517.8,584.8" fill="#0e0e10"/><polygon points="1511.1,609.7 1535.1,619.7 1510.9,630.7" fill="#3a3a3c"/><polygon points="1466.2,640.3 1472.4,653.1 1453.9,654.5" fill="#48494c"/><polygon points="1492.0,649.3 1474.0,647.5 1491.2,633.5" fill="#3a3a3c"/><polygon points="1448.7,544.8 1457.4,540.4 1459.1,550.9" fill="#48494c"/><polygon points="1467.5,655.4 1456.5,658.5 1453.9,648.5" fill="#2a2a2c"/><polygon points="1420.7,569.4 1422.2,556.5 1437.4,563.5" fill="#48494c"/><polygon points="1417.4,548.7 1426.2,529.1 1451.5,535.9" fill="#141416"/><polygon points="1525.4,599.1 1509.2,588.8 1527.7,577.8" fill="#141416"/><polygon points="1452.2,603.0 1434.9,589.9 1458.7,585.9" fill="#5a5c60"/><polygon points="1443.8,567.4 1422.5,568.9 1436.9,557.6" fill="#2a2a2c"/><polygon points="1478.9,566.4 1467.8,573.3 1458.6,554.8" fill="#7a7c80"/><polygon points="1447.4,532.0 1442.1,544.1 1433.0,534.2" fill="#7a7c80"/><polygon points="1461.6,557.1 1480.1,568.4 1470.1,581.5" fill="#1e1e20"/><polygon points="1455.8,613.1 1448.6,579.0 1466.0,595.5" fill="#1e1e20"/><polygon points="1469.4,691.0 1489.0,696.7 1472.3,708.9" fill="#1e1e20"/><polygon points="1457.9,593.1 1456.4,577.5 1481.5,572.2" fill="#7a7c80"/><polygon points="1495.7,634.0 1511.4,630.0 1508.6,648.5" fill="#141416"/><polygon points="1482.0,694.2 1474.2,686.5 1485.7,687.0" fill="#141416"/><polygon points="1521.0,594.9 1519.8,603.0 1514.6,592.0" fill="#0e0e10"/><polygon points="1481.4,630.9 1496.9,621.6 1497.4,640.0" fill="#48494c"/><polygon points="1485.4,575.8 1485.2,562.6 1498.8,571.8" fill="#7a7c80"/><polygon points="1453.6,639.3 1478.5,650.9 1462.2,665.4" fill="#2a2a2c"/><polygon points="1474.0,589.2 1481.4,599.3 1468.1,602.4" fill="#2a2a2c"/><polygon points="1464.1,679.0 1483.6,684.5 1468.2,702.0" fill="#7a7c80"/><polygon points="1508.9,632.6 1516.5,647.6 1499.6,655.4" fill="#1e1e20"/><polygon points="1501.6,570.5 1494.8,577.4 1490.5,567.4" fill="#2a2a2c"/><polygon points="1430.1,535.4 1413.3,555.6 1407.0,531.7" fill="#48494c"/><polygon points="1447.9,574.4 1439.8,573.0 1443.9,566.7" fill="#5a5c60"/><polygon points="1499.6,688.1 1488.8,675.9 1503.9,674.8" fill="#1e1e20"/><polygon points="1509.6,676.1 1499.4,675.1 1504.5,664.8" fill="#1e1e20"/><polygon points="1436.0,567.0 1448.9,565.2 1447.7,579.3" fill="#1e1e20"/><polygon points="1479.7,696.9 1477.8,688.1 1492.1,692.7" fill="#48494c"/><polygon points="1459.0,612.3 1465.5,623.3 1452.0,625.9" fill="#2a2a2c"/><polygon points="1460.4,558.0 1471.1,553.6 1467.3,563.1" fill="#3a3a3c"/><polygon points="1486.0,598.2 1486.7,610.9 1477.4,605.5" fill="#1e1e20"/><polygon points="1506.3,661.5 1494.7,660.0 1502.8,646.7" fill="#141416"/><polygon points="1498.9,648.2 1516.9,639.0 1517.7,653.3" fill="#141416"/><polygon points="1478.0,646.2 1480.0,658.5 1464.0,651.2" fill="#7a7c80"/><polygon points="1446.0,575.8 1409.0,565.3 1433.3,546.1" fill="#48494c"/><polygon points="1503.2,586.8 1505.6,601.7 1490.0,597.8" fill="#5a5c60"/><polygon points="1508.1,576.1 1517.2,585.2 1501.7,583.2" fill="#5a5c60"/></g>
<g><polygon points="1297.8,531.0 1292.6,533.0 1295.9,525.4" fill="#6a6a6e"/><polygon points="1260.4,534.1 1242.2,537.6 1249.4,519.9" fill="#4a4a4c"/><polygon points="1287.3,569.8 1296.5,572.4 1289.7,580.8" fill="#6a6a6e"/><polygon points="1311.5,515.7 1310.8,527.2 1301.2,521.9" fill="#1a1a1a"/><polygon points="1316.2,539.4 1318.1,548.3 1308.7,553.0" fill="#4a4a4c"/><polygon points="1230.8,542.1 1231.3,552.4 1219.4,547.6" fill="#6a6a6e"/><polygon points="1284.7,526.3 1295.6,530.2 1294.2,548.1" fill="#2a2a2a"/><polygon points="1232.6,537.4 1225.6,540.9 1224.5,533.4" fill="#2a2a2a"/><polygon points="1258.0,510.9 1260.0,520.7 1248.3,514.3" fill="#1a1a1a"/><polygon points="1220.4,541.9 1210.0,548.2 1206.7,538.7" fill="#1a1a1a"/><polygon points="1286.7,516.7 1303.9,514.1 1299.2,528.6" fill="#2a2a2a"/><polygon points="1271.0,512.0 1274.2,523.5 1261.6,521.8" fill="#1a1a1a"/><polygon points="1298.1,578.3 1299.0,585.4 1292.4,585.6" fill="#4a4a4c"/><polygon points="1286.2,575.5 1280.8,564.1 1296.2,563.9" fill="#4a4a4c"/><polygon points="1307.6,558.9 1305.0,548.9 1316.4,555.0" fill="#2a2a2a"/><polygon points="1222.7,547.7 1217.3,539.1 1229.7,538.9" fill="#2a2a2a"/><polygon points="1292.0,562.9 1288.1,552.3 1298.0,553.1" fill="#1a1a1a"/><polygon points="1310.8,544.9 1315.9,536.6 1319.8,546.1" fill="#4a4a4c"/><polygon points="1259.3,541.1 1267.8,547.4 1255.3,553.3" fill="#2a2a2a"/><polygon points="1274.1,567.8 1275.4,559.0 1283.4,563.6" fill="#6a6a6e"/><polygon points="1236.1,550.0 1238.9,539.1 1247.8,549.5" fill="#6a6a6e"/><polygon points="1311.6,529.3 1308.5,539.3 1301.8,529.8" fill="#2a2a2a"/><polygon points="1300.4,563.8 1291.7,578.6 1283.2,562.6" fill="#1a1a1a"/><polygon points="1307.5,537.3 1303.0,542.6 1300.4,540.3" fill="#4a4a4c"/><polygon points="1226.1,551.1 1220.3,546.4 1227.0,544.1" fill="#1a1a1a"/><polygon points="1240.8,528.4 1232.1,534.3 1226.2,518.6" fill="#4a4a4c"/><polygon points="1311.4,565.9 1313.8,578.2 1302.7,568.9" fill="#2a2a2a"/><polygon points="1309.2,586.6 1298.9,582.8 1309.0,576.4" fill="#4a4a4c"/><polygon points="1306.2,545.4 1294.1,537.9 1309.1,529.9" fill="#2a2a2a"/><polygon points="1246.8,536.9 1239.0,545.8 1236.9,536.1" fill="#6a6a6e"/></g>
<g><polygon points="1410.3,528.3 1423.8,532.4 1416.4,539.3" fill="#1a1a1a"/><polygon points="1387.7,580.9 1393.6,586.0 1384.0,586.4" fill="#6a6a6e"/><polygon points="1366.6,546.4 1360.6,548.5 1362.1,538.9" fill="#1a1a1a"/><polygon points="1400.3,536.4 1404.3,524.1 1414.1,531.5" fill="#6a6a6e"/><polygon points="1394.3,565.7 1400.2,568.6 1396.1,571.3" fill="#4a4a4c"/><polygon points="1382.9,559.7 1361.7,561.4 1373.7,546.0" fill="#2a2a2a"/><polygon points="1423.5,523.4 1421.0,531.6 1416.0,527.8" fill="#6a6a6e"/><polygon points="1395.7,558.5 1408.5,541.9 1408.3,556.6" fill="#1a1a1a"/><polygon points="1392.3,554.2 1386.8,548.1 1398.8,550.2" fill="#1a1a1a"/><polygon points="1388.3,524.9 1397.2,522.0 1395.9,535.9" fill="#2a2a2a"/><polygon points="1387.2,528.6 1398.0,526.0 1391.6,534.8" fill="#6a6a6e"/><polygon points="1391.0,589.1 1395.9,576.3 1405.5,588.1" fill="#2a2a2a"/><polygon points="1401.6,530.0 1389.4,524.3 1403.0,517.5" fill="#4a4a4c"/><polygon points="1359.9,521.8 1371.3,533.0 1359.2,538.5" fill="#2a2a2a"/><polygon points="1428.7,529.2 1419.4,523.9 1425.7,518.2" fill="#4a4a4c"/><polygon points="1408.1,532.6 1413.7,522.6 1417.6,530.3" fill="#2a2a2a"/><polygon points="1388.0,533.9 1385.4,540.0 1378.9,535.9" fill="#4a4a4c"/><polygon points="1361.1,546.1 1370.2,543.6 1369.5,554.0" fill="#4a4a4c"/><polygon points="1378.5,577.8 1369.4,578.8 1373.1,569.6" fill="#4a4a4c"/><polygon points="1384.1,546.1 1396.1,542.3 1393.2,558.1" fill="#1a1a1a"/><polygon points="1406.8,513.2 1414.7,501.5 1421.4,514.9" fill="#2a2a2a"/><polygon points="1402.3,536.2 1406.9,553.3 1397.4,553.8" fill="#2a2a2a"/><polygon points="1389.3,521.6 1397.3,515.6 1401.6,522.6" fill="#2a2a2a"/><polygon points="1384.3,556.5 1385.2,547.7 1393.7,551.8" fill="#4a4a4c"/><polygon points="1372.6,513.7 1364.7,518.1 1361.8,507.0" fill="#1a1a1a"/></g>
</g>
<polygon points="1222,565 1247,535 1262,545 1252,580 1244,620 1242,660 1248,700 1232,706 1218,662 1215,612" fill="#b0703a" />
<g><polygon points="1240.0,609.5 1243.4,609.0 1241.0,613.8" fill="#7a4a20"/><polygon points="1242.4,699.6 1244.4,702.2 1239.2,704.2" fill="#2a2220"/><polygon points="1223.7,672.0 1226.0,679.4 1218.1,676.9" fill="#7a4a20"/><polygon points="1241.0,555.8 1249.4,563.9 1242.4,567.9" fill="#2a2220"/><polygon points="1222.0,628.8 1222.4,619.6 1229.7,622.6" fill="#4a3a30"/><polygon points="1220.6,608.8 1211.3,612.0 1213.8,602.9" fill="#4a3a30"/><polygon points="1240.6,624.2 1243.9,631.8 1235.0,626.9" fill="#2a2220"/><polygon points="1234.6,543.5 1242.0,548.9 1235.5,554.1" fill="#d09050"/><polygon points="1248.0,705.4 1240.0,695.0 1251.7,696.2" fill="#2a2220"/><polygon points="1254.9,546.7 1255.3,540.2 1261.0,541.2" fill="#7a4a20"/><polygon points="1249.1,578.8 1243.1,578.1 1248.0,575.0" fill="#2a2220"/><polygon points="1238.1,608.1 1231.9,601.2 1241.5,598.8" fill="#2a2220"/><polygon points="1244.3,569.5 1255.6,567.6 1250.6,576.0" fill="#4a3a30"/><polygon points="1252.5,553.8 1259.2,551.6 1260.2,562.8" fill="#2a2220"/><polygon points="1226.4,606.5 1231.7,596.9 1235.2,606.5" fill="#c88048"/><polygon points="1236.1,568.3 1239.2,578.1 1229.0,577.5" fill="#c88048"/><polygon points="1233.1,687.8 1226.9,689.6 1228.4,675.6" fill="#2a2220"/><polygon points="1235.7,702.7 1241.8,701.1 1239.5,706.4" fill="#2a2220"/><polygon points="1244.3,625.6 1245.7,633.9 1238.4,630.5" fill="#7a4a20"/><polygon points="1226.1,679.8 1230.1,675.8 1234.5,682.9" fill="#c88048"/><polygon points="1229.0,575.1 1234.3,580.6 1229.0,583.1" fill="#2a2220"/><polygon points="1239.9,620.1 1234.0,616.7 1239.2,611.5" fill="#7a4a20"/></g>
<polygon points="1398,540 1418,545 1442,598 1456,640 1462,700 1450,704 1436,652 1416,603 1400,572" fill="#7a3418" />
<g><polygon points="1444.0,662.4 1442.5,657.2 1447.2,660.4" fill="#b05a2a"/><polygon points="1431.1,631.7 1426.9,631.8 1429.7,627.2" fill="#3a1a10"/><polygon points="1453.5,647.5 1452.7,655.7 1447.8,652.8" fill="#a04a20"/><polygon points="1443.7,615.5 1442.3,625.0 1435.2,615.5" fill="#3a1a10"/><polygon points="1441.8,607.8 1439.4,603.9 1443.9,601.4" fill="#1e1e1e"/><polygon points="1427.1,565.8 1422.7,570.4 1417.9,565.2" fill="#3a1a10"/><polygon points="1429.7,604.9 1425.6,599.5 1433.5,599.9" fill="#3a1a10"/><polygon points="1449.7,616.3 1437.2,613.3 1445.6,606.9" fill="#a04a20"/><polygon points="1432.8,606.3 1434.7,614.3 1427.9,610.8" fill="#b05a2a"/><polygon points="1443.7,603.6 1437.0,604.7 1439.9,597.7" fill="#a04a20"/><polygon points="1411.4,571.2 1414.3,576.0 1407.9,574.5" fill="#b05a2a"/><polygon points="1405.0,579.2 1404.5,573.7 1406.8,576.2" fill="#b05a2a"/><polygon points="1425.5,590.5 1422.7,594.3 1421.9,589.0" fill="#3a1a10"/><polygon points="1454.1,692.2 1445.4,683.5 1456.7,686.9" fill="#a04a20"/><polygon points="1452.7,698.2 1456.0,700.0 1454.2,703.1" fill="#3a1a10"/><polygon points="1433.0,577.8 1429.5,580.4 1431.2,576.0" fill="#a04a20"/></g>
<polygon points="1320,512 1355,512 1351,560 1368,585 1388,598 1396,615 1411,641 1417,667 1419,710 1412,740 1390,760 1330,760 1300,762 1288,710 1284,678 1286,645 1299,615 1316,592 1327,585 1325,560" fill="#ddd7d0" />
<g><polygon points="1378.7,606.5 1379.7,600.6 1387.0,605.2" fill="#a0a4a8"/><polygon points="1300.4,749.1 1293.1,742.9 1303.0,738.8" fill="#ece6dc"/><polygon points="1345.9,706.4 1337.9,700.7 1344.3,697.9" fill="#a0a4a8"/><polygon points="1299.1,660.2 1297.6,669.9 1288.5,665.3" fill="#ece6dc"/><polygon points="1339.3,542.5 1333.8,547.8 1330.7,539.3" fill="#c8c2ba"/><polygon points="1316.2,751.7 1329.8,751.0 1322.7,760.4" fill="#d8d2ca"/><polygon points="1367.8,730.0 1361.9,729.1 1364.3,725.0" fill="#a0a4a8"/><polygon points="1321.4,652.0 1330.5,643.9 1333.0,656.3" fill="#d8d2ca"/><polygon points="1385.6,599.8 1379.4,612.5 1378.0,602.1" fill="#e8d8c8"/><polygon points="1395.0,712.7 1400.7,709.4 1399.7,715.9" fill="#6a6e74"/><polygon points="1343.6,688.4 1350.4,690.8 1346.4,693.2" fill="#a0a4a8"/><polygon points="1336.2,612.5 1342.3,618.7 1334.0,621.3" fill="#c8c2ba"/><polygon points="1406.9,705.4 1419.6,697.6 1417.5,716.8" fill="#e8d8c8"/><polygon points="1318.3,715.6 1317.9,702.0 1324.7,709.0" fill="#c8c2ba"/><polygon points="1407.5,641.2 1406.5,652.0 1397.7,640.8" fill="#d8d2ca"/><polygon points="1335.1,521.6 1336.0,511.5 1340.7,518.2" fill="#d8d2ca"/><polygon points="1312.5,661.8 1316.3,655.7 1322.5,661.0" fill="#f4f2ee"/><polygon points="1375.5,711.2 1384.6,710.5 1381.7,719.8" fill="#6a6e74"/><polygon points="1414.3,713.4 1411.7,702.6 1423.1,705.5" fill="#ece6dc"/><polygon points="1378.4,736.7 1386.0,744.3 1375.2,749.2" fill="#f4f2ee"/><polygon points="1296.3,692.9 1304.4,700.0 1294.7,704.4" fill="#a0a4a8"/><polygon points="1393.6,668.5 1390.3,672.5 1388.6,667.1" fill="#f4f2ee"/><polygon points="1333.4,722.6 1346.1,720.9 1338.6,732.0" fill="#d8d2ca"/><polygon points="1287.9,712.6 1283.7,704.6 1294.3,707.1" fill="#a0a4a8"/><polygon points="1408.4,721.1 1419.4,716.3 1417.4,727.3" fill="#a0a4a8"/><polygon points="1367.1,639.3 1376.2,630.8 1373.6,641.3" fill="#ece6dc"/><polygon points="1408.4,677.2 1403.7,683.0 1398.9,676.6" fill="#e8d8c8"/><polygon points="1396.2,712.2 1404.6,706.5 1407.8,716.3" fill="#ece6dc"/><polygon points="1377.7,692.8 1371.3,685.1 1388.4,685.4" fill="#6a6e74"/><polygon points="1352.2,658.5 1359.5,663.2 1355.2,668.0" fill="#d8d2ca"/><polygon points="1311.4,620.9 1301.8,633.3 1299.1,621.9" fill="#e8d8c8"/><polygon points="1357.6,746.5 1355.4,741.2 1360.5,744.1" fill="#e8d8c8"/><polygon points="1347.3,692.4 1349.9,703.1 1342.2,698.0" fill="#e8d8c8"/><polygon points="1314.3,738.4 1322.0,732.2 1322.0,737.5" fill="#6a6e74"/><polygon points="1369.6,681.8 1381.4,679.7 1373.7,693.0" fill="#c8c2ba"/><polygon points="1327.3,508.4 1329.0,517.1 1322.5,515.7" fill="#a0a4a8"/><polygon points="1291.5,698.5 1298.3,701.0 1292.5,703.3" fill="#f4f2ee"/><polygon points="1332.2,565.6 1337.4,554.2 1340.0,566.2" fill="#a0a4a8"/><polygon points="1320.7,701.9 1320.3,693.0 1327.5,695.9" fill="#f4f2ee"/><polygon points="1345.9,659.6 1336.6,648.5 1350.0,648.0" fill="#f4f2ee"/><polygon points="1353.1,603.3 1349.1,616.9 1342.7,601.3" fill="#d8d2ca"/><polygon points="1341.2,538.2 1340.8,549.1 1334.1,543.6" fill="#c8c2ba"/><polygon points="1402.7,672.4 1411.6,662.6 1417.7,675.8" fill="#c8c2ba"/><polygon points="1342.3,507.0 1351.4,516.9 1333.9,518.3" fill="#c8c2ba"/><polygon points="1347.4,654.5 1341.2,661.9 1333.4,650.3" fill="#a0a4a8"/><polygon points="1381.8,742.9 1392.8,742.8 1384.2,751.7" fill="#a0a4a8"/><polygon points="1331.1,635.1 1326.8,639.8 1321.7,630.7" fill="#c8c2ba"/><polygon points="1312.1,706.0 1317.9,701.1 1316.4,712.2" fill="#ece6dc"/><polygon points="1297.0,655.9 1285.1,651.2 1298.0,647.2" fill="#a0a4a8"/><polygon points="1356.0,552.4 1348.7,560.3 1342.5,544.3" fill="#f4f2ee"/><polygon points="1304.9,753.7 1312.8,750.6 1309.6,760.2" fill="#a0a4a8"/><polygon points="1372.3,624.9 1374.3,615.1 1383.8,622.3" fill="#a0a4a8"/><polygon points="1355.6,717.5 1362.2,709.8 1369.2,718.5" fill="#e8d8c8"/><polygon points="1369.1,632.6 1376.5,638.5 1367.8,639.9" fill="#e8d8c8"/><polygon points="1366.3,704.0 1373.0,696.1 1379.4,708.6" fill="#c8c2ba"/><polygon points="1299.1,619.5 1301.3,610.5 1308.9,616.3" fill="#a0a4a8"/><polygon points="1381.4,693.3 1379.6,685.5 1389.2,682.7" fill="#a0a4a8"/><polygon points="1313.8,592.7 1324.8,599.4 1317.4,605.3" fill="#d8d2ca"/><polygon points="1315.3,662.8 1315.4,652.1 1324.3,658.2" fill="#ece6dc"/><polygon points="1311.1,645.9 1301.6,635.2 1313.2,631.8" fill="#ece6dc"/><polygon points="1310.9,653.1 1310.4,639.4 1326.7,646.3" fill="#c8c2ba"/><polygon points="1357.8,638.9 1350.4,647.9 1342.1,635.6" fill="#d8d2ca"/><polygon points="1343.1,745.9 1349.6,739.1 1352.6,745.6" fill="#f4f2ee"/><polygon points="1376.2,634.9 1370.1,627.0 1384.8,621.5" fill="#d8d2ca"/><polygon points="1381.7,619.1 1369.9,618.0 1376.8,608.1" fill="#ece6dc"/><polygon points="1328.0,653.6 1335.1,659.4 1329.1,660.2" fill="#ece6dc"/><polygon points="1367.6,717.9 1363.5,719.1 1365.2,710.3" fill="#c8c2ba"/><polygon points="1364.1,682.0 1371.8,675.8 1373.3,685.7" fill="#a0a4a8"/><polygon points="1419.3,725.6 1408.8,726.3 1410.6,713.7" fill="#c8c2ba"/><polygon points="1357.9,745.7 1349.3,746.9 1353.7,740.3" fill="#c8c2ba"/><polygon points="1330.7,546.2 1320.7,545.7 1325.8,536.6" fill="#d8d2ca"/><polygon points="1383.6,666.9 1389.1,668.8 1384.2,673.5" fill="#f4f2ee"/><polygon points="1382.1,618.5 1385.1,625.4 1380.2,625.5" fill="#f4f2ee"/><polygon points="1373.1,654.7 1377.5,661.9 1367.3,662.4" fill="#d8d2ca"/><polygon points="1369.2,624.7 1363.6,624.4 1367.2,618.5" fill="#f4f2ee"/></g>
<polygon points="1331,630 1385,630 1388,680 1378,712 1345,712 1333,680" fill="#3a3a3e" />
<g><polygon points="1384.4,658.9 1383.6,650.0 1389.2,652.0" fill="#9aa0a6"/><polygon points="1358.0,637.3 1359.1,642.1 1352.7,639.4" fill="#6a6e74"/><polygon points="1385.5,661.5 1389.5,667.3 1384.0,665.8" fill="#1a1a1c"/><polygon points="1352.5,645.8 1361.5,652.1 1350.8,655.0" fill="#6a6e74"/><polygon points="1368.0,665.6 1378.0,671.9 1367.5,673.7" fill="#2a2a2c"/><polygon points="1378.7,670.5 1374.2,667.3 1381.5,662.7" fill="#2a2a2c"/><polygon points="1354.3,686.3 1359.7,690.5 1352.8,691.3" fill="#6a6e74"/><polygon points="1348.9,693.5 1356.2,689.5 1354.4,695.6" fill="#2a2a2c"/><polygon points="1370.9,664.2 1366.5,661.3 1370.8,658.6" fill="#6a6e74"/><polygon points="1365.9,717.2 1360.6,708.5 1370.5,707.6" fill="#2a2a2c"/><polygon points="1362.2,659.8 1360.4,653.3 1366.6,656.5" fill="#1a1a1c"/><polygon points="1365.2,626.9 1363.5,635.7 1358.8,630.9" fill="#2a2a2c"/><polygon points="1360.2,700.3 1354.0,702.7 1354.8,696.0" fill="#6a6e74"/><polygon points="1364.7,691.2 1364.0,686.1 1368.9,686.4" fill="#9aa0a6"/><polygon points="1355.1,650.2 1353.0,656.7 1346.0,649.1" fill="#1a1a1c"/><polygon points="1340.1,669.2 1347.0,670.1 1344.4,675.1" fill="#2a2a2c"/><polygon points="1380.4,634.6 1375.8,630.6 1379.8,630.5" fill="#9aa0a6"/><polygon points="1369.7,677.5 1365.0,675.3 1368.7,671.4" fill="#6a6e74"/><polygon points="1351.4,697.6 1353.6,692.5 1357.2,695.7" fill="#1a1a1c"/><polygon points="1361.8,681.3 1361.5,678.6 1365.9,681.1" fill="#2a2a2c"/><polygon points="1346.7,637.4 1355.9,640.7 1344.9,647.4" fill="#2a2a2c"/><polygon points="1348.5,691.2 1346.6,685.7 1351.0,687.4" fill="#2a2a2c"/><polygon points="1358.8,639.4 1357.0,643.7 1353.4,642.1" fill="#2a2a2c"/><polygon points="1357.3,674.5 1364.0,671.5 1362.5,678.7" fill="#1a1a1c"/><polygon points="1383.7,636.0 1381.6,633.0 1385.4,632.3" fill="#9aa0a6"/></g>
<path d="M1314 606 Q1318 592 1352 592 Q1388 592 1391 606 Q1394 626 1370 632 Q1352 636 1334 632 Q1310 626 1314 606 Z" fill="#1c1d20"/>
<ellipse cx="1334" cy="617" rx="9" ry="8" fill="#080808"/><ellipse cx="1372" cy="616" rx="9" ry="8" fill="#080808"/>
<polygon points="1322,600 1345,596 1336,607" fill="#8c949c" />
<polygon points="1362,598 1384,603 1372,608" fill="#7a828a" />
<polygon points="1348,596 1358,596 1354,630" fill="#40444a" />
<circle cx="1280" cy="602.5" r="10" fill="#141414"/><circle cx="1280" cy="602.5" r="7.8" fill="#c8681c"/><circle cx="1280" cy="602.5" r="3.4" fill="#1e1208"/><circle cx="1282.3" cy="599.8" r="1.9" fill="#fff"/>
<path d="M1270 610 Q1280 618 1290 610" stroke="#e0a8a8" stroke-width="2.2" fill="none"/>
<circle cx="1404.3" cy="598" r="8.5" fill="#141414"/><circle cx="1404.3" cy="598" r="6.6" fill="#c8681c"/><circle cx="1404.3" cy="598" r="2.8" fill="#1e1208"/><circle cx="1406.3" cy="595.8" r="1.5" fill="#fff"/>
<path d="M1398 607 Q1408 614 1416 603" stroke="#c87f86" stroke-width="3" fill="none"/>
<polygon points="1288,712 1300,745 1330,756 1400,756 1418,740 1432,712 1455,740 1458,790 1432,812 1411,822 1389,829 1304,833 1282,820 1250,795 1232,760 1240,712" fill="#161616" />
<g><polygon points="1404.9,739.0 1405.7,743.4 1399.9,742.0" fill="#8a8a8a"/><polygon points="1416.5,793.5 1416.7,788.0 1420.8,791.4" fill="#e8e8e8"/><polygon points="1417.4,724.3 1414.0,718.9 1422.2,718.9" fill="#8a8a8a"/><polygon points="1424.3,760.7 1423.2,765.5 1416.7,761.7" fill="#0a0a0a"/><polygon points="1400.5,736.6 1399.3,732.5 1405.1,735.9" fill="#0a0a0a"/><polygon points="1424.6,735.0 1429.7,740.3 1424.4,744.7" fill="#8a8a8a"/><polygon points="1437.4,761.0 1436.9,756.9 1441.0,756.1" fill="#e8e8e8"/><polygon points="1410.5,782.1 1402.7,777.5 1411.4,772.1" fill="#8a8a8a"/><polygon points="1391.4,743.6 1397.4,739.2 1398.5,752.1" fill="#8a8a8a"/><polygon points="1436.1,746.4 1434.2,750.9 1429.2,747.6" fill="#e8e8e8"/><polygon points="1405.2,780.7 1399.3,778.9 1402.5,774.6" fill="#0a0a0a"/><polygon points="1416.8,730.2 1419.9,734.5 1413.9,736.4" fill="#8a8a8a"/><polygon points="1413.8,767.7 1408.4,762.6 1416.5,757.5" fill="#0a0a0a"/><polygon points="1410.1,756.1 1407.6,744.9 1414.2,747.0" fill="#3a3a3a"/><polygon points="1409.9,720.4 1406.3,714.8 1410.3,715.6" fill="#e8e8e8"/><polygon points="1411.5,745.0 1404.1,742.3 1409.3,738.5" fill="#e8e8e8"/><polygon points="1417.0,795.0 1419.4,797.8 1414.1,798.1" fill="#0a0a0a"/><polygon points="1407.7,722.9 1412.6,718.9 1412.7,728.9" fill="#8a8a8a"/><polygon points="1401.4,777.2 1396.6,768.1 1407.1,767.5" fill="#3a3a3a"/><polygon points="1407.1,745.4 1395.4,746.6 1403.5,737.8" fill="#e8e8e8"/></g>
<g><polygon points="1258.9,771.8 1254.2,767.2 1261.4,762.3" fill="#6a6a6e"/><polygon points="1255.2,772.6 1252.5,768.2 1261.0,769.4" fill="#2a2a2a"/><polygon points="1282.3,708.3 1273.1,718.4 1274.6,709.2" fill="#2a2a2a"/><polygon points="1281.3,723.1 1281.0,726.7 1277.4,724.2" fill="#2a2a2a"/><polygon points="1230.9,749.7 1241.3,747.5 1242.0,758.3" fill="#0a0a0a"/><polygon points="1270.5,736.1 1261.4,732.7 1270.6,727.4" fill="#6a6a6e"/><polygon points="1250.5,740.4 1247.0,747.2 1245.0,738.6" fill="#2a2a2a"/><polygon points="1285.0,738.2 1289.0,744.8 1280.1,744.7" fill="#9a9ea4"/><polygon points="1297.4,749.5 1293.5,747.8 1296.0,746.1" fill="#2a2a2a"/><polygon points="1281.5,793.5 1277.3,788.2 1286.3,787.2" fill="#6a6a6e"/><polygon points="1265.1,795.5 1260.8,789.9 1266.8,790.4" fill="#2a2a2a"/><polygon points="1285.6,767.6 1275.8,765.4 1280.2,758.5" fill="#0a0a0a"/><polygon points="1259.9,783.6 1260.0,790.2 1253.6,789.2" fill="#0a0a0a"/><polygon points="1281.6,759.9 1279.5,757.5 1283.8,757.4" fill="#9a9ea4"/><polygon points="1267.7,719.7 1273.5,722.3 1270.7,725.4" fill="#0a0a0a"/></g>
<path d="M1333 730 Q1334 720 1356 721 Q1380 722 1381 736 Q1381 752 1358 754 Q1334 754 1333 742 Z" fill="#d98090"/>
<path d="M1342 728 Q1356 724 1370 730 Q1360 744 1345 740 Z" fill="#e8a0aa" opacity="0.7"/>
<polygon points="1322,754 1387,754 1384,768 1326,770" fill="#9a9a9c" />
<polygon points="1326,756 1345,756 1340,766 1326,767" fill="#e6e6e6" />
<polygon points="1303,768 1410,766 1400,805 1340,820 1308,810" fill="#4a4a4e" />
<g><polygon points="1310.0,811.1 1310.7,803.9 1315.0,807.4" fill="#c8c8c8"/><polygon points="1346.6,776.2 1343.7,770.5 1349.5,771.8" fill="#2a2a2a"/><polygon points="1360.1,816.4 1354.8,812.0 1361.0,807.4" fill="#c8c8c8"/><polygon points="1371.4,769.5 1375.4,768.1 1372.9,773.0" fill="#c8c8c8"/><polygon points="1325.1,800.1 1326.2,793.8 1334.4,800.1" fill="#7a7a7e"/><polygon points="1325.6,800.1 1322.7,794.3 1329.8,793.5" fill="#c8c8c8"/><polygon points="1383.9,778.2 1389.8,776.9 1391.5,784.7" fill="#c8c8c8"/><polygon points="1337.3,790.0 1335.5,794.6 1332.2,792.0" fill="#5a3a30"/><polygon points="1337.0,782.3 1341.1,778.8 1344.0,787.2" fill="#5a3a30"/><polygon points="1312.1,798.2 1320.3,794.2 1318.2,801.9" fill="#2a2a2a"/><polygon points="1359.7,794.7 1363.3,798.3 1358.5,798.8" fill="#2a2a2a"/><polygon points="1330.0,778.9 1324.8,783.1 1323.3,776.7" fill="#c8c8c8"/><polygon points="1382.7,775.7 1388.0,766.2 1392.6,771.9" fill="#5a3a30"/><polygon points="1318.3,816.3 1312.0,811.1 1317.8,806.0" fill="#2a2a2a"/><polygon points="1361.7,798.1 1354.8,802.8 1353.4,796.7" fill="#5a3a30"/><polygon points="1323.8,810.6 1322.3,806.5 1328.1,806.8" fill="#2a2a2a"/><polygon points="1335.8,812.5 1324.5,804.9 1330.2,800.0" fill="#5a3a30"/><polygon points="1390.2,774.0 1387.0,780.1 1384.2,772.6" fill="#2a2a2a"/><polygon points="1380.0,774.8 1381.8,768.3 1385.6,770.0" fill="#2a2a2a"/><polygon points="1355.5,774.2 1362.0,767.9 1364.0,772.3" fill="#c8c8c8"/><polygon points="1365.7,798.5 1366.0,793.1 1368.5,796.9" fill="#5a3a30"/><polygon points="1313.3,775.1 1316.9,776.2 1314.2,779.6" fill="#c8c8c8"/><polygon points="1315.6,784.7 1312.7,787.3 1311.7,782.3" fill="#7a7a7e"/><polygon points="1329.7,802.5 1324.6,802.0 1328.4,799.0" fill="#2a2a2a"/><polygon points="1309.4,788.3 1312.8,790.8 1310.0,793.4" fill="#5a3a30"/></g>
<polygon points="1288,766 1316,772 1312,808 1288,800" fill="#a04a5a" />
<polygon points="1340,808 1400,800 1412,822 1389,829 1330,833" fill="#3e322c" />
<g><polygon points="1396.1,805.5 1403.0,803.9 1405.5,810.2" fill="#2a2220"/><polygon points="1356.1,832.4 1355.2,825.4 1360.8,828.0" fill="#1a1a1a"/><polygon points="1381.4,807.5 1389.7,812.9 1382.1,813.6" fill="#2a2220"/><polygon points="1366.4,827.2 1373.2,830.9 1369.4,834.5" fill="#6a6a6e"/><polygon points="1346.1,805.3 1356.7,802.7 1358.9,809.4" fill="#1a1a1a"/><polygon points="1328.0,823.0 1328.1,819.2 1331.7,822.7" fill="#2a2220"/><polygon points="1348.1,829.1 1340.8,839.4 1330.6,826.6" fill="#2a2220"/><polygon points="1405.8,826.5 1399.0,826.7 1400.7,822.0" fill="#2a2220"/><polygon points="1407.2,820.0 1411.5,830.8 1399.1,823.8" fill="#8a6a50"/><polygon points="1381.0,800.1 1391.5,797.8 1387.4,811.8" fill="#8a6a50"/><polygon points="1410.7,813.2 1401.0,810.7 1409.0,806.2" fill="#8a6a50"/><polygon points="1411.1,818.9 1403.1,812.6 1412.9,810.2" fill="#1a1a1a"/><polygon points="1403.3,815.0 1399.1,818.7 1397.4,814.0" fill="#8a6a50"/><polygon points="1337.2,826.5 1336.6,833.7 1330.7,829.8" fill="#2a2220"/></g>
<g><polygon points="1451.8,778.6 1442.7,776.9 1449.0,770.0" fill="#5a4a40"/><polygon points="1441.4,750.4 1444.7,754.1 1439.3,758.8" fill="#5a4a40"/><polygon points="1447.2,785.2 1448.8,776.0 1452.0,781.1" fill="#8a6a50"/><polygon points="1460.6,783.1 1465.3,789.5 1458.8,792.4" fill="#5a4a40"/><polygon points="1468.2,763.9 1469.5,768.6 1463.4,767.7" fill="#2a2a2a"/><polygon points="1453.2,759.1 1461.4,756.8 1457.3,763.6" fill="#5a4a40"/><polygon points="1465.7,775.4 1467.6,787.1 1452.1,786.7" fill="#c8b8a8"/><polygon points="1444.0,759.5 1446.7,741.4 1458.3,751.2" fill="#a07050"/><polygon points="1453.7,785.0 1442.4,781.0 1447.7,773.7" fill="#c8b8a8"/><polygon points="1458.7,788.8 1469.4,786.5 1465.7,802.2" fill="#a07050"/><polygon points="1465.5,741.0 1471.4,748.9 1461.1,755.8" fill="#c8b8a8"/><polygon points="1465.5,770.6 1465.3,760.9 1473.0,766.6" fill="#2a2a2a"/><polygon points="1463.4,768.3 1455.4,775.7 1452.7,762.4" fill="#5a4a40"/><polygon points="1451.3,796.0 1449.5,812.9 1441.8,806.2" fill="#2a2a2a"/></g>
</g>
<g id="mic">
<path d="M1668 780 Q1679 798 1679 840 L1679 916" stroke="#141414" stroke-width="7" fill="none"/>
<defs><pattern id="mesh" width="3" height="3" patternUnits="userSpaceOnUse"><rect width="3" height="3" fill="#8a7870"/><rect width="1.6" height="1.6" fill="#c0b0a6"/></pattern></defs>
<path d="M1547 703 V660 Q1547 641 1575 641 Q1604 641 1604 660 V703 Z" fill="url(#mesh)"/>
<path d="M1547 703 V660 Q1547 642 1559 641 V703 Z" fill="#cacaca"/>
<path d="M1548 650 Q1555 641 1575 640 Q1595 641 1603 650 L1600 652 Q1590 645 1575 645 Q1558 645 1551 652 Z" fill="#b8b8b8"/>
<rect x="1543" y="703" width="64" height="13" fill="#c4c4c4"/><rect x="1543" y="703" width="7" height="13" fill="#222"/><rect x="1592" y="703" width="15" height="13" fill="#1e1e1e"/><rect x="1560" y="704" width="25" height="4" fill="#e6e6e6"/>
<rect x="1545" y="716" width="62" height="58" fill="#262628"/>
<polygon points="1552,722 1592,722 1586,760 1560,756" fill="#72767e" />
<polygon points="1566,760 1598,746 1590,774" fill="#a8aeb6" />
<polygon points="1548,730 1556,726 1554,770" fill="#4a4e54" />
<path d="M1520 752 L1540 748 M1520 752 L1519 770 M1521 778 L1520 797 L1546 803 M1606 748 L1630 760 L1633 798 L1612 806" fill="none" stroke="#1a1a1c" stroke-width="3"/>
<polygon points="1522,756 1538,754 1536,768 1524,768" fill="#8a8a8a" />
<polygon points="1523,781 1538,784 1540,798 1525,795" fill="#6a6a6e" />
<polygon points="1612,752 1628,762 1624,776 1610,770" fill="#4a4a4e" />
<polygon points="1614,782 1630,786 1628,798 1612,800" fill="#7a7a7e" />
<polygon points="1542,771 1610,771 1620,790 1606,813 1550,813 1538,795" fill="#161618" />
<polygon points="1560,776 1598,776 1590,798 1566,798" fill="#3a3a3e" />
<polygon points="1546,790 1562,800 1556,810" fill="#6a6a6e" />
<polygon points="1596,795 1612,788 1604,810" fill="#55555a" />
<polygon points="1548,744 1556,742 1560,771 1546,771" fill="#1c1c1e" />
<polygon points="1600,744 1609,746 1610,771 1598,771" fill="#1c1c1e" />
<rect x="1516" y="771.8" width="130" height="3.2" fill="#1e1e20"/>
<rect x="1641" y="762" width="34" height="20" fill="#333336"/><rect x="1648" y="765" width="22" height="10" fill="#a4a4a4"/><polygon points="1675,768 1684,764 1684,780 1675,777" fill="#181818"/>
<rect x="1552" y="812" width="52" height="15" fill="#bcbcbc"/><rect x="1552" y="812" width="10" height="15" fill="#222"/><rect x="1594" y="812" width="10" height="15" fill="#1e1e1e"/>
<rect x="1566" y="826" width="22" height="90" fill="#1e1e20"/><rect x="1569" y="830" width="14" height="34" fill="#cfcfcf"/><rect x="1572" y="868" width="8" height="26" fill="#4a4a4e"/>
</g>
</g>
<text x="531.0" y="970.3" font-size="24.6" font-weight="bold" fill="#050505" textLength="171.2" lengthAdjust="spacingAndGlyphs" >STEVE SMITH</text>
<text x="530.8" y="1006.6" font-size="26.3" font-weight="normal" fill="#0a0a0a" stroke="#0a0a0a" stroke-width="0.1" textLength="402.9" lengthAdjust="spacingAndGlyphs" >steve@intelligencebyintent.com</text>
<text x="531.5" y="1042.8" font-size="24.5" font-weight="normal" fill="#0a0a0a" stroke="#0a0a0a" stroke-width="0.1" textLength="183.5" lengthAdjust="spacingAndGlyphs" >+1.818.324.2867</text>
<text x="1056.8" y="1080.0" font-size="12.8" font-weight="normal" fill="#a6a6a6" textLength="161.2" lengthAdjust="spacingAndGlyphs" >© 2025 Intelligence by Intent</text>
</g>
<text x="90.7" y="266.0" font-size="17.5" fill="#e2e2e2" text-anchor="middle">1</text>
<text x="90.5" y="357.7" font-size="17.5" fill="#e2e2e2" text-anchor="middle">2</text>
<text x="90.5" y="449.7" font-size="17.5" fill="#e2e2e2" text-anchor="middle">3</text>
<text x="90.5" y="541.7" font-size="17.5" fill="#e2e2e2" text-anchor="middle">4</text>
<text x="90.5" y="633.7" font-size="17.5" fill="#e2e2e2" text-anchor="middle">5</text>
<filter id="tshadow" x="-10%" y="-10%" width="120%" height="130%"><feGaussianBlur stdDeviation="1"/></filter>
<rect x="110.8" y="247" width="126" height="72.3" rx="7.5" fill="none" stroke="#e5694b" stroke-width="4"/>
<clipPath id="th1"><rect x="113.3" y="249.3" width="121" height="68" rx="5"/></clipPath>
<g clip-path="url(#th1)"><use href="#slidecontent" transform="translate(113.3 249.3) scale(0.0907) translate(-469 -345.4)"/></g>
<rect x="113.2" y="342" width="121.6" height="68.5" rx="6" fill="#000" opacity="0.35" filter="url(#tshadow)"/>
<rect x="113.2" y="341" width="121.6" height="68.5" rx="6" fill="#ffffff"/>
<rect x="113.2" y="434" width="121.6" height="68.5" rx="6" fill="#000" opacity="0.35" filter="url(#tshadow)"/>
<rect x="113.2" y="433" width="121.6" height="68.5" rx="6" fill="#ffffff"/>
<rect x="113.2" y="526" width="121.6" height="68.5" rx="6" fill="#000" opacity="0.35" filter="url(#tshadow)"/>
<rect x="113.2" y="525" width="121.6" height="68.5" rx="6" fill="#ffffff"/>
<rect x="113.2" y="618" width="121.6" height="68.5" rx="6" fill="#000" opacity="0.35" filter="url(#tshadow)"/>
<rect x="113.2" y="617" width="121.6" height="68.5" rx="6" fill="#ffffff"/>
<text x="120" y="349" font-family="Liberation Sans" font-size="4.2" font-weight="bold" fill="#222" textLength="64.0" lengthAdjust="spacingAndGlyphs">The AI Revolution in Legal Practice</text>
<text x="120" y="364.5" font-family="Liberation Sans" font-size="3" font-weight="normal" fill="#6e6e6e" textLength="106.0" lengthAdjust="spacingAndGlyphs">• Legal professionals spending 30% of time on document review and research</text>
<text x="120" y="368.35" font-family="Liberation Sans" font-size="3" font-weight="normal" fill="#6e6e6e" textLength="91.0" lengthAdjust="spacingAndGlyphs">• AI can reduce research time by 60-70% while improving accuracy</text>
<text x="120" y="372.2" font-family="Liberation Sans" font-size="3" font-weight="normal" fill="#6e6e6e" textLength="57.0" lengthAdjust="spacingAndGlyphs">• Firms believe faster technologies first bring</text>
<text x="120" y="376.05" font-family="Liberation Sans" font-size="3" font-weight="normal" fill="#6e6e6e" textLength="74.0" lengthAdjust="spacingAndGlyphs">• Current adoption: 40% of law firms deploy legal AI tools</text>
<text x="120" y="379.9" font-family="Liberation Sans" font-size="3" font-weight="normal" fill="#6e6e6e" textLength="95.0" lengthAdjust="spacingAndGlyphs">• Key applications: research, contract analysis, due diligence, litigation</text>
<text x="120" y="383.75" font-family="Liberation Sans" font-size="3" font-weight="normal" fill="#6e6e6e" textLength="17.0" lengthAdjust="spacingAndGlyphs">  prediction</text>
<text x="120" y="440.5" font-family="Liberation Sans" font-size="4.2" font-weight="bold" fill="#333" textLength="69.0" lengthAdjust="spacingAndGlyphs">Use Case: Contract Review &amp; Analysis</text>
<text x="120" y="461" font-family="Liberation Sans" font-size="6" font-weight="bold" fill="#333" textLength="38.0" lengthAdjust="spacingAndGlyphs">• The Challenge</text>
<text x="175.6" y="461" font-family="Liberation Sans" font-size="6" font-weight="bold" fill="#333" textLength="40.6" lengthAdjust="spacingAndGlyphs">• The AI Solution</text>
<text x="120" y="467.8" font-family="Liberation Sans" font-size="5.2" font-weight="normal" fill="#6e6e6e" textLength="43.0" lengthAdjust="spacingAndGlyphs">• Manual review of</text>
<text x="120" y="473.4" font-family="Liberation Sans" font-size="5.2" font-weight="normal" fill="#6e6e6e" textLength="46.0" lengthAdjust="spacingAndGlyphs">  50-page contracts</text>
<text x="120" y="478.5" font-family="Liberation Sans" font-size="5.2" font-weight="normal" fill="#6e6e6e" textLength="39.0" lengthAdjust="spacingAndGlyphs">  takes 3-4 hours</text>
<text x="120" y="485.5" font-family="Liberation Sans" font-size="5.2" font-weight="normal" fill="#6e6e6e" textLength="49.0" lengthAdjust="spacingAndGlyphs">• High risk of missing</text>
<text x="120" y="490.7" font-family="Liberation Sans" font-size="5.2" font-weight="normal" fill="#6e6e6e" textLength="37.0" lengthAdjust="spacingAndGlyphs">  critical clauses</text>
<text x="120" y="498" font-family="Liberation Sans" font-size="5.2" font-weight="normal" fill="#6e6e6e" textLength="32.0" lengthAdjust="spacingAndGlyphs">• Inconsistent</text>
<text x="175.6" y="467.8" font-family="Liberation Sans" font-size="5.2" font-weight="normal" fill="#6e6e6e" textLength="50.4" lengthAdjust="spacingAndGlyphs">• AI reviews contracts</text>
<text x="175.6" y="473.4" font-family="Liberation Sans" font-size="5.2" font-weight="normal" fill="#6e6e6e" textLength="40.4" lengthAdjust="spacingAndGlyphs">  in 10-15 minutes</text>
<text x="175.6" y="479.7" font-family="Liberation Sans" font-size="5.2" font-weight="normal" fill="#6e6e6e" textLength="43.4" lengthAdjust="spacingAndGlyphs">• 95%+ accuracy in</text>
<text x="175.6" y="485.2" font-family="Liberation Sans" font-size="5.2" font-weight="normal" fill="#6e6e6e" textLength="37.4" lengthAdjust="spacingAndGlyphs">  identifying key</text>
<text x="175.6" y="490.5" font-family="Liberation Sans" font-size="5.2" font-weight="normal" fill="#6e6e6e" textLength="21.4" lengthAdjust="spacingAndGlyphs">  clauses</text>
<text x="175.6" y="498" font-family="Liberation Sans" font-size="5.2" font-weight="normal" fill="#6e6e6e" textLength="27.4" lengthAdjust="spacingAndGlyphs">• Flags risks,</text>
<text x="119.5" y="532.5" font-family="Liberation Sans" font-size="4.2" font-weight="bold" fill="#333" textLength="87.7" lengthAdjust="spacingAndGlyphs">Use Case: Legal Research &amp; Precedent Analysis</text>
<text x="119.5" y="546.5" font-family="Liberation Sans" font-size="4.6" font-weight="bold" fill="#333" textLength="43.6" lengthAdjust="spacingAndGlyphs">Traditional Research</text>
<text x="175.3" y="546.5" font-family="Liberation Sans" font-size="4.6" font-weight="bold" fill="#333" textLength="45.7" lengthAdjust="spacingAndGlyphs">AI-Powered Research</text>
<text x="119.5" y="557.3" font-family="Liberation Sans" font-size="4.2" font-weight="normal" fill="#777" textLength="43.5" lengthAdjust="spacingAndGlyphs">• 5-8 hours searching</text>
<text x="119.5" y="561.8" font-family="Liberation Sans" font-size="4.2" font-weight="normal" fill="#777" textLength="42.5" lengthAdjust="spacingAndGlyphs">  case law databases</text>
<text x="119.5" y="567.8" font-family="Liberation Sans" font-size="4.2" font-weight="normal" fill="#777" textLength="45.5" lengthAdjust="spacingAndGlyphs">• Reading hundreds of</text>
<text x="119.5" y="572.9" font-family="Liberation Sans" font-size="4.2" font-weight="normal" fill="#777" textLength="35.5" lengthAdjust="spacingAndGlyphs">  cases manually</text>
<text x="119.5" y="578.6" font-family="Liberation Sans" font-size="4.2" font-weight="normal" fill="#777" textLength="51.5" lengthAdjust="spacingAndGlyphs">• Risk of missing relevant</text>
<text x="119.5" y="583.2" font-family="Liberation Sans" font-size="4.2" font-weight="normal" fill="#777" textLength="26.5" lengthAdjust="spacingAndGlyphs">  precedents</text>
<text x="119.5" y="588.6" font-family="Liberation Sans" font-size="4.2" font-weight="normal" fill="#777" textLength="32.5" lengthAdjust="spacingAndGlyphs">• Limited cross-</text>
<text x="175.3" y="557.3" font-family="Liberation Sans" font-size="4.2" font-weight="normal" fill="#777" textLength="49.7" lengthAdjust="spacingAndGlyphs">• Comprehensive results</text>
<text x="175.3" y="561.8" font-family="Liberation Sans" font-size="4.2" font-weight="normal" fill="#777" textLength="29.7" lengthAdjust="spacingAndGlyphs">  in 30 minutes</text>
<text x="175.3" y="567.8" font-family="Liberation Sans" font-size="4.2" font-weight="normal" fill="#777" textLength="38.7" lengthAdjust="spacingAndGlyphs">• Natural language</text>
<text x="175.3" y="572.9" font-family="Liberation Sans" font-size="4.2" font-weight="normal" fill="#777" textLength="46.7" lengthAdjust="spacingAndGlyphs">  queries: "cases where</text>
<text x="175.3" y="577.4" font-family="Liberation Sans" font-size="4.2" font-weight="normal" fill="#777" textLength="30.7" lengthAdjust="spacingAndGlyphs">  non-compete</text>
<text x="175.3" y="582.4" font-family="Liberation Sans" font-size="4.2" font-weight="normal" fill="#777" textLength="33.7" lengthAdjust="spacingAndGlyphs">  unenforceable"</text>
<text x="175.3" y="588.3" font-family="Liberation Sans" font-size="4.2" font-weight="normal" fill="#777" textLength="40.7" lengthAdjust="spacingAndGlyphs">• Automatic citation</text>
<text x="119.5" y="624.5" font-family="Liberation Sans" font-size="4.2" font-weight="bold" fill="#333" textLength="73.8" lengthAdjust="spacingAndGlyphs">The Strategic Advantage of AI Adoption</text>
<text x="120" y="640.0" font-size="2.9" fill="#888" textLength="85" lengthAdjust="spacingAndGlyphs">• <tspan font-weight="bold" fill="#555">Competitive Edge:</tspan> Deliver faster, more cost-effective services</text>
<text x="120" y="643.95" font-size="2.9" fill="#888" textLength="94" lengthAdjust="spacingAndGlyphs">• <tspan font-weight="bold" fill="#555">Higher Value Work:</tspan> Redirect time to client counseling and strategy</text>
<text x="120" y="647.9" font-size="2.9" fill="#888" textLength="83" lengthAdjust="spacingAndGlyphs">• <tspan font-weight="bold" fill="#555">Improved Accuracy:</tspan> Reduce human error in repetitive tasks</text>
<text x="120" y="651.85" font-size="2.9" fill="#888" textLength="86" lengthAdjust="spacingAndGlyphs">• <tspan font-weight="bold" fill="#555">Client Satisfaction:</tspan> Transparent pricing and faster turnaround</text>
<text x="120" y="655.8" font-size="2.9" fill="#888" textLength="85" lengthAdjust="spacingAndGlyphs">• <tspan font-weight="bold" fill="#555">Future-Proofing:</tspan> Stay ahead as legal tech becomes standard</text>
<text x="120" y="659.75" font-size="2.9" fill="#888" textLength="81" lengthAdjust="spacingAndGlyphs">• <tspan font-weight="bold" fill="#555">First Steps:</tspan> Start with one use case and measure the impact</text>
</svg></body></html>
